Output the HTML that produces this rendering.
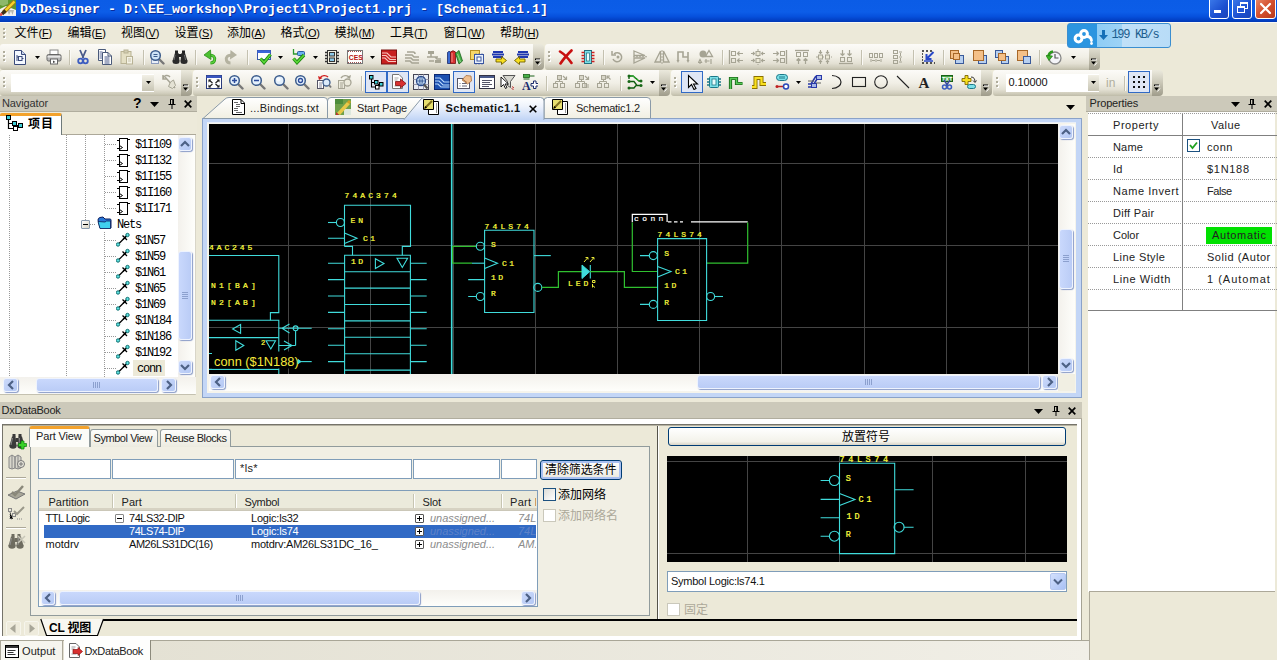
<!DOCTYPE html><html><head><meta charset="utf-8"><title>DxDesigner</title><style>
*{box-sizing:border-box;margin:0;padding:0}
html,body{width:1277px;height:660px;overflow:hidden;background:#ECE9D8}
body{position:relative;font-family:"Liberation Sans","Noto Sans CJK SC",sans-serif;font-size:12px;color:#000}
.a{position:absolute}
.t{position:absolute;white-space:nowrap;line-height:1}
.tb{position:absolute;height:26px;background:linear-gradient(#FCFBF8 0%,#F1EFE6 50%,#E3E0D3 75%,#D0CDBC 90%,#BEBBA8 100%);border-radius:3px 0 0 3px}
.tbe{position:absolute;width:11px;height:26px;background:linear-gradient(#EBE9DD 0%,#C9C6B6 50%,#9F9C8B 100%);border-radius:0 4px 4px 0}
.grip{position:absolute;width:2px;height:2px;background:#B0AD9C;box-shadow:1px 1px 0 #fff}
.sep{position:absolute;width:1px;background:#C4C1B0;box-shadow:1px 0 0 #FAF9F5}
.mono{font-family:"Liberation Mono","Noto Sans CJK SC",monospace}
.serif{font-family:"Liberation Serif","Noto Serif CJK SC",serif}
.sel{position:absolute;border:1px solid #316AC5;background:#DFE6F5}
.hdr{position:absolute;height:16px;background:#CCC9BA;border-bottom:1px solid #B0AD9E}
</style></head><body>
<div class="a" style="left:0px;top:0px;width:1277px;height:22px;background:linear-gradient(#0B5CE6 0%,#0C5DE8 55%,#0650DC 75%,#0240C4 92%,#0238B4 100%)"></div>
<svg class="a" style="left:0;top:0" width="16" height="16" viewBox="0 0 16 16"><rect width="16" height="16" fill="#5E982E"/><path d="M0 0h8v4l-5 2-3-1z" fill="#8DB86A"/><path d="M0 9l6-3 10 4v6H0z" fill="#F2F2EE"/><path d="M7 10l2 5 2-4 1.500 4 1.500-5z" fill="#B8B8B0"/><path d="M14.500 1.500L3.500 12.500" stroke="#A87818" stroke-width="4"/><path d="M14.500 1.500L4 12" stroke="#F6D428" stroke-width="2.400"/><path d="M5.500 10.500L2 14" stroke="#3A3018" stroke-width="3.200"/><path d="M2 13.500L0 15.500" stroke="#D84848" stroke-width="2.600"/></svg>
<div class="t mono" style="left:20px;top:3px;font-size:13.33px;color:#fff;font-weight:bold;letter-spacing:0;text-shadow:1px 1px 0 #0A2C9C">DxDesigner - D:\EE_workshop\Project1\Project1.prj - [Schematic1.1]</div>
<div class="a" style="left:1209px;top:-3px;width:20px;height:22px;border:1px solid #fff;border-radius:3px;background:linear-gradient(135deg,#3C7BEB,#1B4FD0 60%,#1C45B8)"><div class="a" style="left:4px;top:12px;width:7px;height:3px;background:#fff"></div></div>
<div class="a" style="left:1232px;top:-3px;width:20px;height:22px;border:1px solid #fff;border-radius:3px;background:linear-gradient(135deg,#3C7BEB,#1B4FD0 60%,#1C45B8)"><div class="a" style="left:7px;top:4px;width:8px;height:7px;border:1px solid #fff;border-top-width:2px"></div><div class="a" style="left:4px;top:8px;width:8px;height:7px;border:1px solid #fff;border-top-width:2px;background:#2457D6"></div></div>
<div class="a" style="left:1255px;top:-3px;width:21px;height:22px;border:1px solid #fff;border-radius:3px;background:linear-gradient(135deg,#E98A6B,#D4502F 50%,#B83A1B)"><svg class="a" style="left:3px;top:4px" width="13" height="13" viewBox="0 0 13 13"><path d="M2 2L11 11M11 2L2 11" stroke="#fff" stroke-width="2.2" stroke-linecap="round"/></svg></div>
<div class="a" style="left:0px;top:22px;width:1277px;height:22px;background:#ECE9D9;border-top:1px solid #F8F8F4"></div>
<div class="grip" style="left:3px;top:28px"></div>
<div class="grip" style="left:3px;top:32px"></div>
<div class="grip" style="left:3px;top:36px"></div>
<div class="t " style="left:14.5px;top:27px;font-size:12px;letter-spacing:0">文件<span style="font-size:11px;letter-spacing:-0.2px">(<u>F</u>)</span></div>
<div class="t " style="left:67.5px;top:27px;font-size:12px;letter-spacing:0">编辑<span style="font-size:11px;letter-spacing:-0.2px">(<u>E</u>)</span></div>
<div class="t " style="left:121px;top:27px;font-size:12px;letter-spacing:0">视图<span style="font-size:11px;letter-spacing:-0.2px">(<u>V</u>)</span></div>
<div class="t " style="left:174.5px;top:27px;font-size:12px;letter-spacing:0">设置<span style="font-size:11px;letter-spacing:-0.2px">(<u>S</u>)</span></div>
<div class="t " style="left:227px;top:27px;font-size:12px;letter-spacing:0">添加<span style="font-size:11px;letter-spacing:-0.2px">(<u>A</u>)</span></div>
<div class="t " style="left:280.5px;top:27px;font-size:12px;letter-spacing:0">格式<span style="font-size:11px;letter-spacing:-0.2px">(<u>O</u>)</span></div>
<div class="t " style="left:334.5px;top:27px;font-size:12px;letter-spacing:0">模拟<span style="font-size:11px;letter-spacing:-0.2px">(<u>M</u>)</span></div>
<div class="t " style="left:390px;top:27px;font-size:12px;letter-spacing:0">工具<span style="font-size:11px;letter-spacing:-0.2px">(<u>T</u>)</span></div>
<div class="t " style="left:443.5px;top:27px;font-size:12px;letter-spacing:0">窗口<span style="font-size:11px;letter-spacing:-0.2px">(<u>W</u>)</span></div>
<div class="t " style="left:500px;top:27px;font-size:12px;letter-spacing:0">帮助<span style="font-size:11px;letter-spacing:-0.2px">(<u>H</u>)</span></div>
<div class="tb" style="left:0px;top:44px;width:533px"></div>
<div class="tbe" style="left:533px;top:44px"></div>
<div class="grip" style="left:3px;top:51px"></div>
<div class="grip" style="left:3px;top:55px"></div>
<div class="grip" style="left:3px;top:59px"></div>
<svg class="a" style="left:534px;top:58px" width="8" height="9" viewBox="0 0 8 9"><path d="M1 0.5h5v1.4h-5zM1 3.5h5L3.5 6.5z" fill="#000"/><path d="M2 1.9h5M4.5 7.5L7 4.5" stroke="#fff" stroke-width="1" fill="none"/></svg>
<div class="tb" style="left:545px;top:44px;width:544px"></div>
<div class="tbe" style="left:1089px;top:44px"></div>
<div class="grip" style="left:548px;top:51px"></div>
<div class="grip" style="left:548px;top:55px"></div>
<div class="grip" style="left:548px;top:59px"></div>
<svg class="a" style="left:1090px;top:58px" width="8" height="9" viewBox="0 0 8 9"><path d="M1 0.5h5v1.4h-5zM1 3.5h5L3.5 6.5z" fill="#000"/><path d="M2 1.9h5M4.5 7.5L7 4.5" stroke="#fff" stroke-width="1" fill="none"/></svg>
<div class="tb" style="left:0px;top:70px;width:181px"></div>
<div class="tbe" style="left:181px;top:70px"></div>
<div class="grip" style="left:3px;top:77px"></div>
<div class="grip" style="left:3px;top:81px"></div>
<div class="grip" style="left:3px;top:85px"></div>
<svg class="a" style="left:182px;top:84px" width="8" height="9" viewBox="0 0 8 9"><path d="M1 0.5h5v1.4h-5zM1 3.5h5L3.5 6.5z" fill="#000"/><path d="M2 1.9h5M4.5 7.5L7 4.5" stroke="#fff" stroke-width="1" fill="none"/></svg>
<div class="tb" style="left:193px;top:70px;width:466px"></div>
<div class="tbe" style="left:659px;top:70px"></div>
<div class="grip" style="left:196px;top:77px"></div>
<div class="grip" style="left:196px;top:81px"></div>
<div class="grip" style="left:196px;top:85px"></div>
<svg class="a" style="left:660px;top:84px" width="8" height="9" viewBox="0 0 8 9"><path d="M1 0.5h5v1.4h-5zM1 3.5h5L3.5 6.5z" fill="#000"/><path d="M2 1.9h5M4.5 7.5L7 4.5" stroke="#fff" stroke-width="1" fill="none"/></svg>
<div class="tb" style="left:671px;top:70px;width:310px"></div>
<div class="tbe" style="left:981px;top:70px"></div>
<div class="grip" style="left:674px;top:77px"></div>
<div class="grip" style="left:674px;top:81px"></div>
<div class="grip" style="left:674px;top:85px"></div>
<svg class="a" style="left:982px;top:84px" width="8" height="9" viewBox="0 0 8 9"><path d="M1 0.5h5v1.4h-5zM1 3.5h5L3.5 6.5z" fill="#000"/><path d="M2 1.9h5M4.5 7.5L7 4.5" stroke="#fff" stroke-width="1" fill="none"/></svg>
<div class="tb" style="left:993px;top:70px;width:159px"></div>
<div class="tbe" style="left:1152px;top:70px"></div>
<div class="grip" style="left:996px;top:77px"></div>
<div class="grip" style="left:996px;top:81px"></div>
<div class="grip" style="left:996px;top:85px"></div>
<svg class="a" style="left:1153px;top:84px" width="8" height="9" viewBox="0 0 8 9"><path d="M1 0.5h5v1.4h-5zM1 3.5h5L3.5 6.5z" fill="#000"/><path d="M2 1.9h5M4.5 7.5L7 4.5" stroke="#fff" stroke-width="1" fill="none"/></svg>
<!--ICONS-->
<svg class="a" style="left:12.0px;top:49.0px" width="16" height="16" viewBox="0 0 16 16"><path d="M2.500 1.500H9.500L13.500 5.500V15.500H2.500Z" fill="#F4F8FF" stroke="#3A4A7A"/><path d="M9.500 1.500V5.500H13.500" fill="#C8D4EC" stroke="#3A4A7A"/><path d="M5 6v6M5 8h2M10 9.500h1.500" stroke="#3A4A7A"/><rect x="6.500" y="7.500" width="3.500" height="4" fill="none" stroke="#3A4A7A"/></svg>
<svg class="a" style="left:35.0px;top:56px" width="5" height="3" viewBox="0 0 5 3"><path d="M0 0h5L2.500 3z" fill="#000"/></svg>
<svg class="a" style="left:46.0px;top:49.0px" width="16" height="16" viewBox="0 0 16 16"><rect x="4" y="1" width="8" height="5" fill="#fff" stroke="#888"/><rect x="1" y="5.500" width="14" height="6.500" rx="1.500" fill="#B8B8B8" stroke="#666"/><rect x="1.500" y="7" width="13" height="1.500" fill="#E8E8E8"/><rect x="4.500" y="10" width="7" height="5" fill="#fff" stroke="#666"/><path d="M7 11.500l2.500 1.500-2.500 1z" fill="#444"/></svg>
<div class="sep" style="left:69px;top:50px;height:15px"></div>
<svg class="a" style="left:74.5px;top:49.0px" width="16" height="16" viewBox="0 0 16 16"><path d="M5 1l3.500 8M11 1L7.500 9" stroke="#4A5A8A" stroke-width="1.800"/><circle cx="5.500" cy="12" r="2.300" fill="none" stroke="#3C5CC0" stroke-width="1.800"/><circle cx="10.500" cy="12" r="2.300" fill="none" stroke="#3C5CC0" stroke-width="1.800"/></svg>
<svg class="a" style="left:97.0px;top:49.0px" width="16" height="16" viewBox="0 0 16 16"><path d="M1.500 0.500H8.500V11.500H1.500Z" fill="#fff" stroke="#4A5A7A"/><path d="M2.500 3h3M2.500 5h3M2.500 7h3M2.500 9h3" stroke="#5A6A9A"/><path d="M5.500 3.500H11L14.500 7V15.500H5.500Z" fill="#fff" stroke="#4A5A7A"/><path d="M7.500 8h5M7.500 10h5M7.500 12h5M7.500 14h5" stroke="#4A5A8A"/><path d="M11 3.500V7h3.500" fill="none" stroke="#4A5A7A"/></svg>
<svg class="a" style="left:119.0px;top:49.0px" width="16" height="16" viewBox="0 0 16 16"><rect x="2" y="2.500" width="10" height="12" fill="#E4DFC4" stroke="#B8B294"/><rect x="5" y="1" width="4" height="3" fill="#D0CBB0" stroke="#B8B294"/><rect x="7.500" y="7.500" width="6" height="7.500" fill="#F4F2E6" stroke="#B8B294"/><path d="M9 10h3M9 12h3" stroke="#C8C4AC"/></svg>
<div class="sep" style="left:143px;top:50px;height:15px"></div>
<svg class="a" style="left:149.0px;top:49.0px" width="16" height="16" viewBox="0 0 16 16"><rect x="2.500" y="6.500" width="7" height="8" fill="#E8EEF8" stroke="#8A9ABC"/><path d="M10 10L14.500 14.500" stroke="#777" stroke-width="2.400" stroke-linecap="round"/><circle cx="6.5" cy="6.5" r="4.800" fill="#CFE4F8" stroke="#3C5C8C" stroke-width="1.500"/><path d="M4.500 5.500h4M4.500 7.500h4" stroke="#3C5C8C" stroke-width="1.200"/></svg>
<svg class="a" style="left:172.0px;top:49.0px" width="16" height="16" viewBox="0 0 16 16"><path d="M3 1.500h3v3h-3zM10 1.500h3v3h-3zM6 5h4v3h-4z" fill="#222"/><path d="M0.500 12L3 4h3.500l1 8zM8.500 12l1-8h3.500l2.500 8z" fill="#2A2A2A"/><ellipse cx="4" cy="12.500" rx="3.500" ry="2.500" fill="#2A2A2A"/><ellipse cx="12" cy="12.500" rx="3.500" ry="2.500" fill="#2A2A2A"/><path d="M3 6l-1 5M12.500 6l1 5" stroke="#888" stroke-width="0.800"/></svg>
<div class="sep" style="left:195px;top:50px;height:15px"></div>
<svg class="a" style="left:202.0px;top:49.0px" width="16" height="16" viewBox="0 0 16 16"><path d="M7 6.500c4.500-1 6.500 2 5.500 5-0.500 1.500-2 2.500-4 2.500" fill="none" stroke="#2C9A1C" stroke-width="3"/><path d="M7 6.500c4.500-1 6.500 2 5.500 5-0.500 1.500-2 2.500-4 2.500" fill="none" stroke="#5CD03C" stroke-width="1.500"/><path d="M8.500 1L2 6l7 4.500z" fill="#4CC030" stroke="#2C8A1C" stroke-width="0.800"/></svg>
<svg class="a" style="left:223.0px;top:49.0px" width="16" height="16" viewBox="0 0 16 16"><path d="M9 6.500c-4.500-1-6.500 2-5.500 5 0.500 1.500 2 2.500 4 2.500" fill="none" stroke="#B4B2A0" stroke-width="3"/><path d="M7.500 1L14 6l-7 4.500z" fill="#B4B2A0"/></svg>
<div class="sep" style="left:247px;top:50px;height:15px"></div>
<svg class="a" style="left:256.0px;top:49.0px" width="16" height="16" viewBox="0 0 16 16"><rect x="1.500" y="1.500" width="13" height="9" fill="#fff" stroke="#3A56B0"/><rect x="1.500" y="1.500" width="13" height="2.500" fill="#3A66D8"/><path d="M4.500 9.500l3.500 4 6.500-8" fill="none" stroke="#1E8A12" stroke-width="3.400"/><path d="M4.500 9.500l3.500 4 6.500-8" fill="none" stroke="#5CD838" stroke-width="1.600"/></svg>
<svg class="a" style="left:277.5px;top:56px" width="5" height="3" viewBox="0 0 5 3"><path d="M0 0h5L2.500 3z" fill="#000"/></svg>
<svg class="a" style="left:291.0px;top:49.0px" width="16" height="16" viewBox="0 0 16 16"><path d="M2.500 0v5h4" fill="none" stroke="#2C9A2C" stroke-width="1.300"/><rect x="6.500" y="2.500" width="7" height="4" rx="1" fill="#6CB0F0" stroke="#2A5AA0"/><path d="M2.500 9.500l3.500 4 7-7.500" fill="none" stroke="#1E8A12" stroke-width="3.400"/><path d="M2.500 9.500l3.500 4 7-7.500" fill="none" stroke="#5CD838" stroke-width="1.600"/></svg>
<svg class="a" style="left:312.5px;top:56px" width="5" height="3" viewBox="0 0 5 3"><path d="M0 0h5L2.500 3z" fill="#000"/></svg>
<svg class="a" style="left:324.0px;top:49.0px" width="16" height="16" viewBox="0 0 16 16"><rect x="3.500" y="1.500" width="9" height="13" fill="#F0EEE0" stroke="#333"/><path d="M1 3.500h2.500M1 6.500h2.500M1 9.500h2.500M1 12.500h2.500M12.500 3.500h2.500M12.500 6.500h2.500M12.500 9.500h2.500M12.500 12.500h2.500" stroke="#333" stroke-width="1.400"/><rect x="5.500" y="3.500" width="5" height="3.500" fill="#8CC8E8" stroke="#333"/><rect x="5.500" y="9" width="5" height="3.500" fill="#8CC8E8" stroke="#333"/></svg>
<svg class="a" style="left:347.0px;top:49.0px" width="16" height="16" viewBox="0 0 16 16"><rect x="0.500" y="1.500" width="15" height="13" fill="#fff" stroke="#777"/><path d="M1 2.500h14M1 13.500h14" stroke="#A05050" stroke-dasharray="1 1"/><text x="1.800" y="10.500" font-family="Liberation Sans, sans-serif" font-size="6.800" font-weight="bold" fill="#B81010" letter-spacing="0">CES</text></svg>
<svg class="a" style="left:369.5px;top:56px" width="5" height="3" viewBox="0 0 5 3"><path d="M0 0h5L2.500 3z" fill="#000"/></svg>
<svg class="a" style="left:381.0px;top:49.0px" width="16" height="16" viewBox="0 0 16 16"><rect x="0.500" y="1" width="15" height="14" fill="#C82020" stroke="#7A1010"/><path d="M1 4h5l4 4h5M1 6.500h4l4 4h6M1 9h3l3.500 3.500h7.500" fill="none" stroke="#F8C8C0" stroke-width="1.100"/></svg>
<svg class="a" style="left:404.0px;top:49.0px" width="16" height="16" viewBox="0 0 16 16"><path d="M3 3h6q2 0 2 2M1 6h7l2 2h5M1 9h6l2 2h6M1 12h5l2 2h7" fill="none" stroke="#A6A494" stroke-width="1.600"/></svg>
<svg class="a" style="left:425.5px;top:49.0px" width="16" height="16" viewBox="0 0 16 16"><rect x="2" y="2" width="6" height="3" fill="#A6A494"/><rect x="9" y="11" width="6" height="3" fill="#A6A494"/><path d="M5 5v3h7M1 8h8l2 2h4M3 12h5" fill="none" stroke="#A6A494" stroke-width="1.500"/></svg>
<svg class="a" style="left:447.0px;top:49.0px" width="16" height="16" viewBox="0 0 16 16"><path d="M0.500 3.500Q2 1.500 3.500 3V14.500H0.500Z" fill="#3A6AD0" stroke="#1A2A6A" stroke-width="0.800"/><path d="M3.500 3Q6 0.500 8.500 3V14.500H3.500Z" fill="#D83030" stroke="#701010" stroke-width="0.800"/><path d="M5 4v9" stroke="#F8B0A0" stroke-width="0.800"/><path d="M8.500 4.500L12 1.500l3.500 10.500L12 15z" fill="#48B048" stroke="#186018" stroke-width="0.800"/><path d="M10.500 5l3 8" stroke="#A8E0A0" stroke-width="0.800"/></svg>
<svg class="a" style="left:469.0px;top:49.0px" width="16" height="16" viewBox="0 0 16 16"><rect x="1.500" y="1.500" width="9" height="9" fill="#F8D868" stroke="#B89020"/><rect x="5.500" y="5.500" width="9" height="9" fill="#E8F0FC" stroke="#3A56A0"/><rect x="8" y="8" width="4" height="4" fill="#fff" stroke="#3A56A0"/><path d="M7 5.500v-1M10 5.500v-1M13 5.500v-1M7 15.500v-1M10 15.500v-1M13 15.500v-1" stroke="#3A56A0"/></svg>
<svg class="a" style="left:491.0px;top:49.0px" width="16" height="16" viewBox="0 0 16 16"><path d="M2 3h10M1 5.500h12M2 8h10" stroke="#2038B0" stroke-width="1.800"/><path d="M5 10h5.500v-2.500l5 4-5 4v-2.500h-5.500z" fill="#F8E020" stroke="#706000" stroke-width="0.900"/></svg>
<svg class="a" style="left:514.0px;top:49.0px" width="16" height="16" viewBox="0 0 16 16"><path d="M4 3h10M3 5.500h12M4 8h10" stroke="#2038B0" stroke-width="1.800"/><path d="M11 10h-5.500v-2.500l-5 4 5 4v-2.500h5.500z" fill="#F8E020" stroke="#706000" stroke-width="0.900"/></svg>
<svg class="a" style="left:558.0px;top:49.0px" width="16" height="16" viewBox="0 0 16 16"><path d="M2 2.500C6 5 10 9 13.500 14M13.500 1.500C10 5 6 9 2.500 14.500" stroke="#C81010" stroke-width="2.600" fill="none" stroke-linecap="round"/></svg>
<svg class="a" style="left:580.0px;top:49.0px" width="16" height="16" viewBox="0 0 16 16"><rect x="4.500" y="1.500" width="7" height="13" fill="#7CE0E8" stroke="#207080"/><rect x="6.500" y="4" width="3" height="8" fill="#E8FCFC" stroke="#207080" stroke-width="0.700"/><path d="M1.500 3.500h3M1.500 6.500h3M1.500 9.500h3M1.500 12.500h3M11.500 3.500h3M11.500 6.500h3M11.500 9.500h3M11.500 12.500h3" stroke="#D02020" stroke-width="1.500"/></svg>
<div class="sep" style="left:603px;top:50px;height:15px"></div>
<svg class="a" style="left:610.0px;top:49.0px" width="16" height="16" viewBox="0 0 16 16"><path d="M4 5a4.500 4.500 0 1 1-1 5" fill="none" stroke="#A6A494" stroke-width="1.500"/><path d="M2 2v4h4" fill="none" stroke="#A6A494" stroke-width="1.500"/><circle cx="8" cy="8" r="1.500" fill="#A6A494"/></svg>
<svg class="a" style="left:632.0px;top:49.0px" width="16" height="16" viewBox="0 0 16 16"><path d="M2 2l11 4.500H2zM2 9h11L2 14z" fill="none" stroke="#A6A494" stroke-width="1.300"/><path d="M1 7.750h14" stroke="#A6A494" stroke-dasharray="2 1"/></svg>
<svg class="a" style="left:654.0px;top:49.0px" width="16" height="16" viewBox="0 0 16 16"><path d="M6.500 2v11H1zM9.500 2v11H15z" fill="none" stroke="#A6A494" stroke-width="1.300"/><path d="M8 1v14" stroke="#A6A494" stroke-dasharray="2 1"/></svg>
<svg class="a" style="left:675.5px;top:49.0px" width="16" height="16" viewBox="0 0 16 16"><path d="M2 11V3h5v5h5V3M12 3v8" fill="none" stroke="#A6A494" stroke-width="1.600"/><path d="M0.500 11l1.500 3 1.500-3zM10.500 11l1.500 3 1.500-3z" fill="#A6A494"/></svg>
<svg class="a" style="left:698.0px;top:49.0px" width="16" height="16" viewBox="0 0 16 16"><circle cx="5" cy="5" r="3.500" fill="#A6A494"/><path d="M11 1.500l3.500 6h-7z" fill="none" stroke="#A6A494" stroke-width="1.300"/><path d="M2 10.500l-1.500 3h3zM2 13v2M8 10v4M6.500 12h5M13 10v5" stroke="#A6A494" stroke-width="1.200" fill="none"/></svg>
<div class="sep" style="left:721.5px;top:50px;height:15px"></div>
<svg class="a" style="left:728.0px;top:49.0px" width="16" height="16" viewBox="0 0 16 16"><path d="M1.500 1v14" stroke="#A6A494" stroke-width="1.300"/><rect x="3.500" y="2.500" width="4" height="4" fill="none" stroke="#A6A494"/><rect x="3.500" y="9.500" width="4" height="4" fill="none" stroke="#A6A494"/><path d="M15 4.500H9.500M11.500 2.500l-2 2 2 2M15 11.500H9.500M11.500 9.500l-2 2 2 2" fill="none" stroke="#A6A494" stroke-width="1.200"/></svg>
<svg class="a" style="left:750.0px;top:49.0px" width="16" height="16" viewBox="0 0 16 16"><path d="M8 0v16" stroke="#A6A494" stroke-dasharray="2 1"/><rect x="6" y="2.500" width="4" height="4" fill="#ECE9D8" stroke="#A6A494"/><rect x="6" y="9.500" width="4" height="4" fill="#ECE9D8" stroke="#A6A494"/><path d="M1 4.500h3.500M3 3l1.500 1.500L3 6M15 4.500h-3.500M13 3l-1.500 1.500L13 6M1 11.500h3.500M3 10l1.500 1.500L3 13M15 11.500h-3.500M13 10l-1.500 1.500L13 13" fill="none" stroke="#A6A494" stroke-width="1.100"/></svg>
<svg class="a" style="left:772.0px;top:49.0px" width="16" height="16" viewBox="0 0 16 16"><path d="M14.500 1v14" stroke="#A6A494" stroke-width="1.300"/><rect x="8.500" y="2.500" width="4" height="4" fill="none" stroke="#A6A494"/><rect x="8.500" y="9.500" width="4" height="4" fill="none" stroke="#A6A494"/><path d="M1 4.500H6.500M4.500 2.500l2 2-2 2M1 11.500H6.500M4.500 9.500l2 2-2 2" fill="none" stroke="#A6A494" stroke-width="1.200"/></svg>
<svg class="a" style="left:794.0px;top:49.0px" width="16" height="16" viewBox="0 0 16 16"><path d="M1 1.500h14" stroke="#A6A494" stroke-width="1.300"/><rect x="2.500" y="3.500" width="4" height="4" fill="none" stroke="#A6A494"/><rect x="9.500" y="3.500" width="4" height="4" fill="none" stroke="#A6A494"/><path d="M4.500 15V9.500M2.500 11.500l2-2 2 2M11.500 15V9.500M9.500 11.500l2-2 2 2" fill="none" stroke="#A6A494" stroke-width="1.200"/></svg>
<svg class="a" style="left:815.5px;top:49.0px" width="16" height="16" viewBox="0 0 16 16"><path d="M0 8h16" stroke="#A6A494" stroke-dasharray="2 1"/><rect x="2.500" y="6" width="4" height="4" fill="#ECE9D8" stroke="#A6A494"/><rect x="9.500" y="6" width="4" height="4" fill="#ECE9D8" stroke="#A6A494"/><path d="M4.500 1v3.500M3 3l1.500 1.500L6 3M11.500 1v3.500M10 3l1.500 1.500L13 3M4.500 15v-3.500M3 13l1.500-1.500L6 13M11.500 15v-3.500M10 13l1.500-1.500L13 13" fill="none" stroke="#A6A494" stroke-width="1.100"/></svg>
<svg class="a" style="left:837.5px;top:49.0px" width="16" height="16" viewBox="0 0 16 16"><path d="M1 14.500h14" stroke="#A6A494" stroke-width="1.300"/><rect x="2.500" y="8.500" width="4" height="4" fill="none" stroke="#A6A494"/><rect x="9.500" y="8.500" width="4" height="4" fill="none" stroke="#A6A494"/><path d="M4.500 1V6.500M2.500 4.500l2 2 2-2M11.500 1V6.500M9.500 4.500l2 2 2-2" fill="none" stroke="#A6A494" stroke-width="1.200"/></svg>
<div class="sep" style="left:861px;top:50px;height:15px"></div>
<svg class="a" style="left:868.0px;top:49.0px" width="16" height="16" viewBox="0 0 16 16"><rect x="1.500" y="4.500" width="3" height="4" fill="none" stroke="#A6A494"/><rect x="6.500" y="4.500" width="3" height="4" fill="none" stroke="#A6A494"/><rect x="11.500" y="4.500" width="3" height="4" fill="none" stroke="#A6A494"/><path d="M3 10v3M8 10v3M13 10v3M4 11.500h3M9 11.500h3" stroke="#A6A494"/></svg>
<svg class="a" style="left:890.0px;top:49.0px" width="16" height="16" viewBox="0 0 16 16"><rect x="3.500" y="1.500" width="4" height="3" fill="none" stroke="#A6A494"/><rect x="3.500" y="6.500" width="4" height="3" fill="none" stroke="#A6A494"/><rect x="3.500" y="11.500" width="4" height="3" fill="none" stroke="#A6A494"/><path d="M9 3h3M9 8h3M9 13h3M10.500 4v3M10.500 9v3" stroke="#A6A494"/></svg>
<div class="sep" style="left:913px;top:50px;height:15px"></div>
<svg class="a" style="left:920.0px;top:49.0px" width="16" height="16" viewBox="0 0 16 16"><path d="M2 2h2M6 2h2M10 2h2M2 5h1M2 8h1M2 11h1M2 14h2M6 14h2M10 14h2M14 14h1" stroke="#222" stroke-width="1.500"/><path d="M13.500 3L7 9.500M6.500 5v5h5" fill="none" stroke="#2848C8" stroke-width="2"/><path d="M4 12h9" stroke="#2848C8" stroke-width="1.500"/></svg>
<div class="sep" style="left:943px;top:50px;height:15px"></div>
<svg class="a" style="left:949.0px;top:49.0px" width="16" height="16" viewBox="0 0 16 16"><rect x="1.500" y="1.500" width="8" height="8" fill="#F4C088" stroke="#A86828"/><rect x="6.500" y="6.500" width="8" height="8" fill="#B8D0F0" stroke="#3A5A9A"/><rect x="4.500" y="4.500" width="6" height="6" fill="#F4C088" stroke="#A86828"/></svg>
<svg class="a" style="left:972.0px;top:49.0px" width="16" height="16" viewBox="0 0 16 16"><rect x="6.500" y="6.500" width="8" height="8" fill="#B8D0F0" stroke="#3A5A9A"/><rect x="1.500" y="1.500" width="10" height="10" fill="#F4C088" stroke="#A86828"/></svg>
<svg class="a" style="left:994.0px;top:49.0px" width="16" height="16" viewBox="0 0 16 16"><rect x="1.500" y="1.500" width="7" height="7" fill="#B8D0F0" stroke="#3A5A9A"/><rect x="7.500" y="7.500" width="7" height="7" fill="#B8D0F0" stroke="#3A5A9A"/><rect x="4.500" y="4.500" width="7" height="7" fill="#F4C088" stroke="#A86828"/></svg>
<svg class="a" style="left:1016.0px;top:49.0px" width="16" height="16" viewBox="0 0 16 16"><rect x="1.500" y="1.500" width="10" height="10" fill="#F4C088" stroke="#A86828"/><rect x="7.500" y="7.500" width="7" height="7" fill="#B8D0F0" stroke="#3A5A9A"/></svg>
<div class="sep" style="left:1039px;top:50px;height:15px"></div>
<svg class="a" style="left:1046.0px;top:49.0px" width="16" height="16" viewBox="0 0 16 16"><circle cx="9" cy="9" r="6" fill="#F4F4F8" stroke="#888" stroke-width="1.300"/><path d="M9 5v4h3.500" fill="none" stroke="#555" stroke-width="1.200"/><path d="M7 2.500c-3 0.500-5 3-4.500 6" fill="none" stroke="#2C9A1C" stroke-width="2.600"/><path d="M0 6.500l3 5 3.500-4.500z" fill="#3CB828" stroke="#1C7A10" stroke-width="0.700"/></svg>
<svg class="a" style="left:1071.0px;top:56px" width="5" height="3" viewBox="0 0 5 3"><path d="M0 0h5L2.500 3z" fill="#000"/></svg>
<div class="a" style="left:11px;top:74px;width:143px;height:18px;background:#fff;border:1px solid #fff"></div>
<div class="a" style="left:142px;top:75px;width:12px;height:16px;background:linear-gradient(#F2F0E6,#C8C5B4)"></div>
<svg class="a" style="left:146.0px;top:81px" width="5" height="3" viewBox="0 0 5 3"><path d="M0 0h5L2.500 3z" fill="#000"/></svg>
<svg class="a" style="left:160.5px;top:74.0px" width="16" height="16" viewBox="0 0 16 16"><path d="M2 4.500A4 4 0 0 1 9 3M2 1v4h3.500" fill="none" stroke="#A6A494" stroke-width="1.500"/><path d="M4 3l10 11" stroke="#A6A494" stroke-width="1.500"/><path d="M9.500 8l3-2 2 5.500-3 3-4-2z" fill="#E4E2D4" stroke="#A6A494" stroke-width="1"/></svg>
<svg class="a" style="left:206.0px;top:74.0px" width="16" height="16" viewBox="0 0 16 16"><rect x="0.500" y="1.500" width="15" height="13" fill="#fff" stroke="#2A3A7A"/><rect x="0.500" y="1.500" width="15" height="2.500" fill="#3A56C0"/><path d="M3 6l3.500 3M13 6l-3.500 3M3 13l3.500-3M13 13l-3.500-3" stroke="#222" stroke-width="1.200"/><path d="M2.500 5.500h3l-3 3zM13.500 5.500h-3l3 3zM2.500 13.500h3l-3-3zM13.500 13.500h-3l3-3z" fill="#222"/></svg>
<svg class="a" style="left:228.0px;top:74.0px" width="16" height="16" viewBox="0 0 16 16"><path d="M10 10L14.500 14.500" stroke="#777" stroke-width="2.400" stroke-linecap="round"/><circle cx="6.5" cy="6.5" r="4.800" fill="#E4F0FC" stroke="#3C5C8C" stroke-width="1.500"/><path d="M4 6.500h5M6.500 4v5" stroke="#2A4A9A" stroke-width="1.500"/></svg>
<svg class="a" style="left:250.0px;top:74.0px" width="16" height="16" viewBox="0 0 16 16"><path d="M10 10L14.500 14.500" stroke="#777" stroke-width="2.400" stroke-linecap="round"/><circle cx="6.5" cy="6.5" r="4.800" fill="#E4F0FC" stroke="#3C5C8C" stroke-width="1.500"/><path d="M4 6.500h5" stroke="#2A4A9A" stroke-width="1.500"/></svg>
<svg class="a" style="left:272.5px;top:74.0px" width="16" height="16" viewBox="0 0 16 16"><path d="M10 10L14.500 14.500" stroke="#777" stroke-width="2.400" stroke-linecap="round"/><circle cx="6.5" cy="6.5" r="4.800" fill="#E4F0FC" stroke="#3C5C8C" stroke-width="1.500"/><circle cx="5.500" cy="5.500" r="2" fill="#fff" opacity="0.800"/></svg>
<svg class="a" style="left:294.0px;top:74.0px" width="16" height="16" viewBox="0 0 16 16"><path d="M10 10L14.500 14.500" stroke="#777" stroke-width="2.400" stroke-linecap="round"/><circle cx="6.5" cy="6.5" r="4.800" fill="#E4F0FC" stroke="#3C5C8C" stroke-width="1.500"/><circle cx="6.500" cy="6.500" r="2" fill="none" stroke="#2A4A9A" stroke-width="1.300"/></svg>
<svg class="a" style="left:316.0px;top:74.0px" width="16" height="16" viewBox="0 0 16 16"><rect x="1.500" y="6.500" width="6" height="8" fill="#fff" stroke="#556"/><path d="M3 9h3M3 11h3M3 13h3" stroke="#889"/><circle cx="10.500" cy="8.500" r="3.500" fill="#DCEBFA" stroke="#3C5C8C" stroke-width="1.300"/><path d="M13 11l2 2.500" stroke="#777" stroke-width="2"/><path d="M4 4c2-3 6-3 8-1" fill="none" stroke="#D02020" stroke-width="1.400"/><path d="M2 2l1 4 3.500-2z" fill="#D02020"/></svg>
<svg class="a" style="left:337.0px;top:74.0px" width="16" height="16" viewBox="0 0 16 16"><rect x="1.500" y="6.500" width="6" height="8" fill="#ECEADC" stroke="#A6A494"/><path d="M3 9h3M3 11h3M3 13h3" stroke="#A6A494"/><circle cx="10.500" cy="8.500" r="3.500" fill="#ECEADC" stroke="#A6A494" stroke-width="1.300"/><path d="M4 4c2-3 6-3 8-1" fill="none" stroke="#A6A494" stroke-width="1.400"/><path d="M14 1l-1 4-3.500-2z" fill="#A6A494"/></svg>
<div class="sep" style="left:361px;top:76px;height:15px"></div>
<div class="sel" style="left:365px;top:71px;width:22px;height:22px"></div>
<div class="sel" style="left:387px;top:71px;width:22px;height:22px"></div>
<div class="sel" style="left:453px;top:71px;width:22px;height:22px"></div>
<svg class="a" style="left:368.0px;top:74.0px" width="16" height="16" viewBox="0 0 16 16"><path d="M3.500 4v9h4M3.500 8.500h3M10 10.500h3" stroke="#000" stroke-width="1.100" fill="none"/><rect x="1.500" y="1.500" width="3.500" height="3.500" fill="#40D0D8" stroke="#000"/><rect x="6.500" y="6.500" width="3.500" height="3.500" fill="#40D0D8" stroke="#000"/><rect x="7.500" y="11.500" width="3.500" height="3.500" fill="#fff" stroke="#000"/><rect x="11.500" y="8.500" width="3.500" height="3.500" fill="#40D0D8" stroke="#000"/></svg>
<svg class="a" style="left:390.5px;top:74.0px" width="16" height="16" viewBox="0 0 16 16"><path d="M1.500 0.500H8L11.500 4V14.500H1.500Z" fill="#fff" stroke="#777"/><path d="M3.500 4h4M3.500 6h3M3.500 12h6" stroke="#AAA"/><path d="M4.500 7.500h5v-2.500l5.500 4.500-5.500 4.500v-2.500h-5z" fill="#D83030" stroke="#801010" stroke-width="0.800"/></svg>
<svg class="a" style="left:412.5px;top:74.0px" width="16" height="16" viewBox="0 0 16 16"><rect x="0.500" y="0.500" width="15" height="15" fill="#E8ECF4" stroke="#445"/><path d="M0.500 5.500h15M0.500 10.500h15M5.500 0.500v15M10.500 0.500v15" stroke="#99A"/><circle cx="8" cy="7" r="4.500" fill="#C8E0F8" stroke="#2A4A8A" stroke-width="1.300"/><path d="M8 2.500v9M3.500 7h9M5.500 3.500c1.500 2 1.500 5 0 7M10.500 3.500c-1.500 2-1.500 5 0 7" fill="none" stroke="#2A4A8A" stroke-width="0.700"/><path d="M11 10.500l3.500 4" stroke="#555" stroke-width="2.200"/></svg>
<svg class="a" style="left:433.5px;top:74.0px" width="16" height="16" viewBox="0 0 16 16"><rect x="0.500" y="0.500" width="15" height="15" fill="#1C50B0" stroke="#0C2870"/><path d="M1 4h5l4 4h5.500M1 7h4l4 4h6.500M1 10h3l3 3h8.500" fill="none" stroke="#B8D8FC" stroke-width="1.100"/></svg>
<svg class="a" style="left:456.0px;top:74.0px" width="16" height="16" viewBox="0 0 16 16"><rect x="1.500" y="4.500" width="12" height="10" fill="#fff" stroke="#556"/><path d="M3.500 9.500h1M6 9.500h5M3.500 12h1M6 12h5" stroke="#667"/><path d="M6 6l4-4.500 5 0.500 0.500 5-4 3z" fill="#F0C090" stroke="#A87040" stroke-width="0.800"/><path d="M7 5.500l4 3" stroke="#A87040"/></svg>
<svg class="a" style="left:479.0px;top:74.0px" width="16" height="16" viewBox="0 0 16 16"><rect x="0.500" y="1.500" width="15" height="13" fill="#fff" stroke="#334"/><rect x="1" y="2" width="14" height="2" fill="#4A5A8A"/><path d="M3 6.500h10M3 8.500h8M3 10.500h10M3 12.500h7" stroke="#556"/></svg>
<svg class="a" style="left:500.0px;top:74.0px" width="16" height="16" viewBox="0 0 16 16"><path d="M3 1.500h12l-4.500 6v6l-3-2v-4z" fill="#D8D8D0" stroke="#555" stroke-width="1"/><path d="M1 3l0 10 2.500-2.500 2 4 1.500-1-2-3.500h3.500z" fill="#fff" stroke="#000" stroke-width="0.900"/><path d="M12 12.500l2 1.500M11.500 14.500l2 1" stroke="#C03030" stroke-width="1"/></svg>
<svg class="a" style="left:522.0px;top:74.0px" width="16" height="16" viewBox="0 0 16 16"><rect x="1.500" y="0.500" width="6" height="3" fill="#48B048" stroke="#186018" stroke-width="0.800"/><path d="M7.500 2h5M1.500 5h6" stroke="#186018"/><text x="0" y="15.500" font-family="Liberation Serif, serif" font-size="12" font-weight="bold" fill="#1C2C6C">A</text><path d="M9 9.500h2.500v-2.500h2.500v2.500h2.500v2.500h-2.500v2.500h-2.500v-2.500h-2.500z" fill="#fff" stroke="#1C2C6C" stroke-width="1"/></svg>
<div class="sep" style="left:546px;top:76px;height:15px"></div>
<svg class="a" style="left:552.0px;top:74.0px" width="16" height="16" viewBox="0 0 16 16"><rect x="5.500" y="1.500" width="4" height="4" fill="#D8D6C8" stroke="#A6A494"/><rect x="1.500" y="9.500" width="4" height="4" fill="none" stroke="#A6A494"/><rect x="8.500" y="9.500" width="4" height="4" fill="none" stroke="#A6A494"/><path d="M3.500 9.500v-2h7v2M7.500 5.500v2" fill="none" stroke="#A6A494"/><path d="M11 2l3.500 3.500M14.500 2.500v3h-3" fill="none" stroke="#A6A494" stroke-width="1.200"/></svg>
<svg class="a" style="left:573.5px;top:74.0px" width="16" height="16" viewBox="0 0 16 16"><rect x="5.500" y="1.500" width="4" height="4" fill="#D8D6C8" stroke="#A6A494"/><rect x="1.500" y="9.500" width="4" height="4" fill="none" stroke="#A6A494"/><rect x="8.500" y="9.500" width="4" height="4" fill="none" stroke="#A6A494"/><path d="M3.500 9.500v-2h7v2M7.500 5.500v2" fill="none" stroke="#A6A494"/><path d="M11 2l3.500 3.500M14.500 2.500v3h-3M10 11h5M10 13h5" fill="none" stroke="#A6A494" stroke-width="1.200"/></svg>
<svg class="a" style="left:596.0px;top:74.0px" width="16" height="16" viewBox="0 0 16 16"><rect x="5.500" y="1.500" width="4" height="4" fill="#D8D6C8" stroke="#A6A494"/><rect x="1.500" y="9.500" width="4" height="4" fill="none" stroke="#A6A494"/><rect x="8.500" y="9.500" width="4" height="4" fill="none" stroke="#A6A494"/><path d="M3.500 9.500v-2h7v2M7.500 5.500v2" fill="none" stroke="#A6A494"/><path d="M14.500 5.500L11 2M11 5v-3h3" fill="none" stroke="#A6A494" stroke-width="1.200"/></svg>
<div class="sep" style="left:619.5px;top:76px;height:15px"></div>
<svg class="a" style="left:627.0px;top:74.0px" width="16" height="16" viewBox="0 0 16 16"><path d="M2 2h4l6 5h2M2 7.500h5l3 4h4M2 14h5l2-2.500M2 2v3" fill="none" stroke="#0C5C0C" stroke-width="1.300"/><path d="M3 2h3l6 5" fill="none" stroke="#30C030" stroke-width="1.300" stroke-dasharray="1.500 1"/><circle cx="2" cy="2" r="1.500" fill="#186818"/><circle cx="2" cy="7.500" r="1.500" fill="#186818"/><circle cx="2" cy="14" r="1.500" fill="#186818"/><circle cx="14" cy="7" r="1.500" fill="#186818"/><circle cx="14" cy="11.500" r="1.500" fill="#186818"/></svg>
<svg class="a" style="left:649.5px;top:81px" width="5" height="3" viewBox="0 0 5 3"><path d="M0 0h5L2.500 3z" fill="#000"/></svg>
<div class="sel" style="left:681px;top:71px;width:22px;height:22px"></div>
<svg class="a" style="left:684.0px;top:74.0px" width="16" height="16" viewBox="0 0 16 16"><path d="M4.500 1.500v12l3-3 2.500 5 2-1-2.500-4.500h4z" fill="#fff" stroke="#000" stroke-width="1.100"/></svg>
<svg class="a" style="left:706.0px;top:74.0px" width="16" height="16" viewBox="0 0 16 16"><rect x="3.500" y="2.500" width="9" height="11" rx="1" fill="#7CE0E8" stroke="#1C7888"/><rect x="6" y="5" width="4" height="6" fill="#E8FCFC" stroke="#1C7888" stroke-width="0.800"/><path d="M1 5h2.500M1 8h2.500M1 11h2.500M12.500 5h2.500M12.500 8h2.500M12.500 11h2.500" stroke="#1C7888" stroke-width="1.300"/></svg>
<svg class="a" style="left:728.0px;top:74.0px" width="16" height="16" viewBox="0 0 16 16"><path d="M2.500 15V4.500h6v5h6" fill="none" stroke="#1C6C1C" stroke-width="3.200"/><path d="M2.500 15V4.500h6v5h6" fill="none" stroke="#58C858" stroke-width="1.400"/></svg>
<svg class="a" style="left:750.5px;top:74.0px" width="16" height="16" viewBox="0 0 16 16"><path d="M1 13h3.500V4h6v6h4.500" fill="none" stroke="#8A7000" stroke-width="4"/><path d="M1 13h3.500V4h6v6h4.500" fill="none" stroke="#F8E020" stroke-width="2.200"/></svg>
<svg class="a" style="left:774.0px;top:74.0px" width="16" height="16" viewBox="0 0 16 16"><rect x="2.500" y="0.500" width="11" height="6" rx="3" fill="#7CE0E8" stroke="#1C7888"/><path d="M6 2v3M8 2v3M10 2v3" stroke="#1C7888"/><path d="M4 12.500h6" stroke="#C02020" stroke-width="1.500"/><circle cx="3" cy="12.500" r="1.500" fill="#C02020"/><circle cx="12" cy="12.500" r="2.500" fill="#fff" stroke="#2848B8" stroke-width="1.500"/></svg>
<svg class="a" style="left:795.5px;top:81px" width="5" height="3" viewBox="0 0 5 3"><path d="M0 0h5L2.500 3z" fill="#000"/></svg>
<svg class="a" style="left:807.0px;top:74.0px" width="16" height="16" viewBox="0 0 16 16"><path d="M1 13h4l5-8h5M1 10h3l5-8" fill="none" stroke="#2838A8" stroke-width="1.600"/><rect x="9.500" y="1.500" width="5" height="4" fill="#A8B8E8" stroke="#2838A8"/><rect x="4.500" y="9.500" width="5" height="4" fill="#A8B8E8" stroke="#2838A8"/><path d="M1 7h6M9 9h5" stroke="#606060" stroke-width="1.200"/></svg>
<svg class="a" style="left:829.0px;top:74.0px" width="16" height="16" viewBox="0 0 16 16"><path d="M3 1.500C15 2 15 14 3 14.500" fill="none" stroke="#222" stroke-width="1.200"/></svg>
<svg class="a" style="left:851.0px;top:74.0px" width="16" height="16" viewBox="0 0 16 16"><rect x="1.500" y="3.500" width="13" height="9" fill="none" stroke="#222" stroke-width="1.100"/></svg>
<svg class="a" style="left:873.0px;top:74.0px" width="16" height="16" viewBox="0 0 16 16"><circle cx="8" cy="8" r="6.300" fill="none" stroke="#222" stroke-width="1.100"/></svg>
<svg class="a" style="left:894.5px;top:74.0px" width="16" height="16" viewBox="0 0 16 16"><path d="M2 2l12 12" stroke="#222" stroke-width="1.100"/></svg>
<svg class="a" style="left:916.5px;top:74.0px" width="16" height="16" viewBox="0 0 16 16"><text x="1.500" y="14" font-family="Liberation Serif, serif" font-size="15" font-weight="bold" fill="#222">A</text></svg>
<svg class="a" style="left:939.0px;top:74.0px" width="16" height="16" viewBox="0 0 16 16"><rect x="2.500" y="1.500" width="11" height="6" fill="#48A848" stroke="#186018"/><text x="3" y="7" font-family="Liberation Sans, sans-serif" font-size="5.500" font-weight="bold" fill="#fff">TXT</text><path d="M5 6l4 6M11 6L7 12" stroke="#3A4A9A" stroke-width="1.500"/><circle cx="5.500" cy="13" r="2" fill="none" stroke="#3A5CC0" stroke-width="1.500"/><circle cx="10.500" cy="13" r="2" fill="none" stroke="#3A5CC0" stroke-width="1.500"/></svg>
<svg class="a" style="left:961.0px;top:74.0px" width="16" height="16" viewBox="0 0 16 16"><path d="M1 4.500h3v-3h3v3h3v3h-3v3h-3v-3h-3z" fill="#F8E020" stroke="#806800" stroke-width="0.900"/><rect x="6.500" y="10.500" width="8" height="4" rx="2" fill="#7CE0E8" stroke="#1C7888"/><path d="M10 3c3 0 4 2 4 5M12 6.500l2 2 1.500-2" fill="none" stroke="#333" stroke-width="1"/></svg>
<div class="a" style="left:1006px;top:74px;width:93px;height:18px;background:#fff"></div>
<div class="a" style="left:1088px;top:75px;width:11px;height:16px;background:linear-gradient(#F2F0E6,#C8C5B4)"></div>
<svg class="a" style="left:1091.0px;top:81px" width="5" height="3" viewBox="0 0 5 3"><path d="M0 0h5L2.500 3z" fill="#000"/></svg>
<div class="t " style="left:1008.5px;top:77px;font-size:11px;letter-spacing:-0.109px;color:#111">0.10000</div>
<div class="t " style="left:1106px;top:77px;font-size:12px;color:#B0AE9E">in</div>
<div class="sep" style="left:1124px;top:76px;height:15px"></div>
<div class="sel" style="left:1128px;top:71px;width:22px;height:22px"></div>
<svg class="a" style="left:1131.0px;top:74.0px" width="16" height="16" viewBox="0 0 16 16"><g fill="#111"><rect x="2" y="2" width="2" height="2"/><rect x="7" y="2" width="2" height="2"/><rect x="12" y="2" width="2" height="2"/><rect x="2" y="7" width="2" height="2"/><rect x="7" y="7" width="2" height="2"/><rect x="12" y="7" width="2" height="2"/><rect x="2" y="12" width="2" height="2"/><rect x="7" y="12" width="2" height="2"/><rect x="12" y="12" width="2" height="2"/></g></svg>
<div class="a" style="left:1067px;top:23px;width:104px;height:25px;border-radius:3px;border:1px solid #3A8ED0;background:linear-gradient(90deg,#2B95E0 0,#2B95E0 29px,#8FCDF5 29px,#9DD3F6 54px,#C0E0F8 54px,#B8DCF7 100%)"></div>
<svg class="a" style="left:1071px;top:26px" width="24" height="20" viewBox="0 0 24 20"><circle cx="7.500" cy="12.500" r="3.400" fill="none" stroke="#fff" stroke-width="3"/><circle cx="13" cy="8" r="3.400" fill="none" stroke="#fff" stroke-width="3"/><path d="M16 10.500q4 0 4.500 4" fill="none" stroke="#fff" stroke-width="2.800" stroke-linecap="round"/><circle cx="20.500" cy="17.500" r="1.400" fill="#fff"/></svg>
<svg class="a" style="left:1099px;top:30px" width="9" height="11" viewBox="0 0 9 11"><path d="M3 0h3v5h3l-4.5 5L0 5h3z" fill="#1670B8"/></svg>
<div class="t mono" style="left:1111.5px;top:29px;font-size:12px;color:#1C5E8E;letter-spacing:-1.35px">199 KB/s</div>
<div class="hdr" style="left:0px;top:96px;width:197px;height:16px;"></div>
<div class="t " style="left:2px;top:98px;font-size:11px;letter-spacing:-0.120px;color:#333">Navigator</div>
<div class="t " style="left:133px;top:96px;font-size:14px;font-weight:bold">?</div>
<svg class="a" style="left:150.0px;top:101.5px" width="9" height="5" viewBox="0 0 9 5"><path d="M0 0h9L4.5 5z" fill="#000"/></svg>
<svg class="a" style="left:167.5px;top:99px" width="8" height="10" viewBox="0 0 8 10"><path d="M2 0.5h4M2.5 0.5v5M5.5 0.5v5M4.8 0.5v5M0.5 5.5h7M4 6v4" stroke="#000" stroke-width="1" fill="none"/></svg>
<svg class="a" style="left:183.5px;top:100.0px" width="8" height="8" viewBox="0 0 8 8"><path d="M0.7 0.7L7.3 7.3M7.3 0.7L0.7 7.3" stroke="#000" stroke-width="1.7"/></svg>
<div class="a" style="left:0px;top:112px;width:197px;height:23px;background:#EDEADA"></div>
<div class="a" style="left:62px;top:134px;width:134px;height:1px;background:#ACA899"></div>
<div class="a" style="left:0px;top:113px;width:62px;height:22px;background:#fff;border-top:3px solid #F3A22C;border-right:1px solid #6E7A7A;border-radius:2px 2px 0 0"></div>
<svg class="a" style="left:6px;top:115px" width="18" height="16" viewBox="0 0 18 16"><path d="M2.5 3v10.5h5M2.5 8.5h4M9 10.5h3" stroke="#000" stroke-width="1.2" fill="none"/><rect x="0.5" y="0.5" width="4" height="4" fill="#3FD0D8" stroke="#000"/><rect x="6.5" y="6.500" width="4" height="4" fill="#3FD0D8" stroke="#000"/><rect x="7.5" y="11.5" width="4" height="4" fill="#fff" stroke="#000"/><rect x="12.5" y="8.5" width="4" height="4" fill="#3FD0D8" stroke="#000"/></svg>
<div class="t " style="left:28px;top:118px;font-size:12px;font-weight:bold;letter-spacing:1px">项目</div>
<div class="a" style="left:0px;top:135px;width:196px;height:260px;background:#fff;border-right:1px solid #D8D5C8;border-bottom:1px solid #C4C1B0"></div>
<div class="a" style="left:9px;top:135px;width:1px;height:242px;background:repeating-linear-gradient(#999 0 1px,transparent 1px 2px)"></div>
<div class="a" style="left:66px;top:135px;width:1px;height:242px;background:repeating-linear-gradient(#999 0 1px,transparent 1px 2px)"></div>
<div class="a" style="left:85px;top:135px;width:1px;height:85px;background:repeating-linear-gradient(#999 0 1px,transparent 1px 2px)"></div>
<div class="a" style="left:104px;top:135px;width:1px;height:74px;background:repeating-linear-gradient(#999 0 1px,transparent 1px 2px)"></div>
<div class="a" style="left:104px;top:232px;width:1px;height:145px;background:repeating-linear-gradient(#999 0 1px,transparent 1px 2px)"></div>
<div class="a" style="left:105px;top:144px;width:11px;height:1px;background:repeating-linear-gradient(90deg,#999 0 1px,transparent 1px 2px)"></div>
<svg class="a" style="left:116px;top:137px" width="14" height="15" viewBox="0 0 14 15"><rect x="3.500" y="1.5" width="8" height="12" fill="#fff" stroke="#000"/><path d="M1 3.500h2.500M1 11.5h2.500M11.5 2.500h2.500M3.500 8.500l3 2-3 2" stroke="#000" fill="none"/></svg>
<div class="t " style="left:135px;top:139px;font-size:12px;font-family:'Liberation Mono',monospace;letter-spacing:-1.2px">$1I109</div>
<div class="a" style="left:105px;top:160px;width:11px;height:1px;background:repeating-linear-gradient(90deg,#999 0 1px,transparent 1px 2px)"></div>
<svg class="a" style="left:116px;top:153px" width="14" height="15" viewBox="0 0 14 15"><rect x="3.500" y="1.5" width="8" height="12" fill="#fff" stroke="#000"/><path d="M1 3.500h2.500M1 11.5h2.500M11.5 2.500h2.500M3.500 8.500l3 2-3 2" stroke="#000" fill="none"/></svg>
<div class="t " style="left:135px;top:155px;font-size:12px;font-family:'Liberation Mono',monospace;letter-spacing:-1.2px">$1I132</div>
<div class="a" style="left:105px;top:176px;width:11px;height:1px;background:repeating-linear-gradient(90deg,#999 0 1px,transparent 1px 2px)"></div>
<svg class="a" style="left:116px;top:169px" width="14" height="15" viewBox="0 0 14 15"><rect x="3.500" y="1.5" width="8" height="12" fill="#fff" stroke="#000"/><path d="M1 3.500h2.500M1 11.5h2.500M11.5 2.500h2.500M3.500 8.500l3 2-3 2" stroke="#000" fill="none"/></svg>
<div class="t " style="left:135px;top:171px;font-size:12px;font-family:'Liberation Mono',monospace;letter-spacing:-1.2px">$1I155</div>
<div class="a" style="left:105px;top:192px;width:11px;height:1px;background:repeating-linear-gradient(90deg,#999 0 1px,transparent 1px 2px)"></div>
<svg class="a" style="left:116px;top:185px" width="14" height="15" viewBox="0 0 14 15"><rect x="3.500" y="1.5" width="8" height="12" fill="#fff" stroke="#000"/><path d="M1 3.500h2.500M1 11.5h2.500M11.5 2.500h2.500M3.500 8.500l3 2-3 2" stroke="#000" fill="none"/></svg>
<div class="t " style="left:135px;top:187px;font-size:12px;font-family:'Liberation Mono',monospace;letter-spacing:-1.2px">$1I160</div>
<div class="a" style="left:105px;top:208px;width:11px;height:1px;background:repeating-linear-gradient(90deg,#999 0 1px,transparent 1px 2px)"></div>
<svg class="a" style="left:116px;top:201px" width="14" height="15" viewBox="0 0 14 15"><rect x="3.500" y="1.5" width="8" height="12" fill="#fff" stroke="#000"/><path d="M1 3.500h2.500M1 11.5h2.500M11.5 2.500h2.500M3.500 8.500l3 2-3 2" stroke="#000" fill="none"/></svg>
<div class="t " style="left:135px;top:203px;font-size:12px;font-family:'Liberation Mono',monospace;letter-spacing:-1.2px">$1I171</div>
<div class="a" style="left:86px;top:224px;width:10px;height:1px;background:repeating-linear-gradient(90deg,#999 0 1px,transparent 1px 2px)"></div>
<div class="a" style="left:81px;top:220px;width:9px;height:9px;background:linear-gradient(135deg,#fff,#D8D4C4);border:1px solid #8A9CB0;border-radius:1px"></div>
<div class="a" style="left:83px;top:224px;width:5px;height:1px;background:#000"></div>
<svg class="a" style="left:97px;top:216px" width="16" height="15" viewBox="0 0 16 15"><path d="M1 4q0-2 2-2.500l3-0.500 2 2h5q1 0 1 1v8h-11z" fill="#2878D8" stroke="#0A1A5A"/><path d="M1 5.500l7 0.500 1.500-1 4 0 0 7.500h-10.500z" fill="#40D0F0" stroke="#0A1A5A" stroke-width="0.800"/></svg>
<div class="t " style="left:117px;top:219px;font-size:12px;font-family:'Liberation Mono',monospace;letter-spacing:-1.2px">Nets</div>
<div class="a" style="left:105px;top:240px;width:11px;height:1px;background:repeating-linear-gradient(90deg,#999 0 1px,transparent 1px 2px)"></div>
<svg class="a" style="left:116px;top:232px" width="15" height="15" viewBox="0 0 15 15"><path d="M2.500 12L11 3.500" stroke="#000" stroke-width="1.200"/><circle cx="2" cy="12.500" r="1.700" fill="#5FE0E0" stroke="#107070"/><path d="M6.500 3.500l4.500 4.500M10.500 4L7 7.500" stroke="#000" stroke-width="1.300"/><circle cx="11.500" cy="3" r="1.700" fill="#5FE0E0" stroke="#107070"/></svg>
<div class="t " style="left:135px;top:235px;font-size:12px;font-family:'Liberation Mono',monospace;letter-spacing:-1.2px">$1N57</div>
<div class="a" style="left:105px;top:256px;width:11px;height:1px;background:repeating-linear-gradient(90deg,#999 0 1px,transparent 1px 2px)"></div>
<svg class="a" style="left:116px;top:248px" width="15" height="15" viewBox="0 0 15 15"><path d="M2.500 12L11 3.500" stroke="#000" stroke-width="1.200"/><circle cx="2" cy="12.500" r="1.700" fill="#5FE0E0" stroke="#107070"/><path d="M6.500 3.500l4.500 4.500M10.500 4L7 7.500" stroke="#000" stroke-width="1.300"/><circle cx="11.500" cy="3" r="1.700" fill="#5FE0E0" stroke="#107070"/></svg>
<div class="t " style="left:135px;top:251px;font-size:12px;font-family:'Liberation Mono',monospace;letter-spacing:-1.2px">$1N59</div>
<div class="a" style="left:105px;top:272px;width:11px;height:1px;background:repeating-linear-gradient(90deg,#999 0 1px,transparent 1px 2px)"></div>
<svg class="a" style="left:116px;top:264px" width="15" height="15" viewBox="0 0 15 15"><path d="M2.500 12L11 3.500" stroke="#000" stroke-width="1.200"/><circle cx="2" cy="12.500" r="1.700" fill="#5FE0E0" stroke="#107070"/><path d="M6.500 3.500l4.500 4.500M10.500 4L7 7.500" stroke="#000" stroke-width="1.300"/><circle cx="11.500" cy="3" r="1.700" fill="#5FE0E0" stroke="#107070"/></svg>
<div class="t " style="left:135px;top:267px;font-size:12px;font-family:'Liberation Mono',monospace;letter-spacing:-1.2px">$1N61</div>
<div class="a" style="left:105px;top:288px;width:11px;height:1px;background:repeating-linear-gradient(90deg,#999 0 1px,transparent 1px 2px)"></div>
<svg class="a" style="left:116px;top:280px" width="15" height="15" viewBox="0 0 15 15"><path d="M2.500 12L11 3.500" stroke="#000" stroke-width="1.200"/><circle cx="2" cy="12.500" r="1.700" fill="#5FE0E0" stroke="#107070"/><path d="M6.500 3.500l4.500 4.500M10.500 4L7 7.500" stroke="#000" stroke-width="1.300"/><circle cx="11.500" cy="3" r="1.700" fill="#5FE0E0" stroke="#107070"/></svg>
<div class="t " style="left:135px;top:283px;font-size:12px;font-family:'Liberation Mono',monospace;letter-spacing:-1.2px">$1N65</div>
<div class="a" style="left:105px;top:304px;width:11px;height:1px;background:repeating-linear-gradient(90deg,#999 0 1px,transparent 1px 2px)"></div>
<svg class="a" style="left:116px;top:296px" width="15" height="15" viewBox="0 0 15 15"><path d="M2.500 12L11 3.500" stroke="#000" stroke-width="1.200"/><circle cx="2" cy="12.500" r="1.700" fill="#5FE0E0" stroke="#107070"/><path d="M6.500 3.500l4.500 4.500M10.500 4L7 7.500" stroke="#000" stroke-width="1.300"/><circle cx="11.500" cy="3" r="1.700" fill="#5FE0E0" stroke="#107070"/></svg>
<div class="t " style="left:135px;top:299px;font-size:12px;font-family:'Liberation Mono',monospace;letter-spacing:-1.2px">$1N69</div>
<div class="a" style="left:105px;top:320px;width:11px;height:1px;background:repeating-linear-gradient(90deg,#999 0 1px,transparent 1px 2px)"></div>
<svg class="a" style="left:116px;top:312px" width="15" height="15" viewBox="0 0 15 15"><path d="M2.500 12L11 3.500" stroke="#000" stroke-width="1.200"/><circle cx="2" cy="12.500" r="1.700" fill="#5FE0E0" stroke="#107070"/><path d="M6.500 3.500l4.500 4.500M10.500 4L7 7.500" stroke="#000" stroke-width="1.300"/><circle cx="11.500" cy="3" r="1.700" fill="#5FE0E0" stroke="#107070"/></svg>
<div class="t " style="left:135px;top:315px;font-size:12px;font-family:'Liberation Mono',monospace;letter-spacing:-1.2px">$1N184</div>
<div class="a" style="left:105px;top:336px;width:11px;height:1px;background:repeating-linear-gradient(90deg,#999 0 1px,transparent 1px 2px)"></div>
<svg class="a" style="left:116px;top:328px" width="15" height="15" viewBox="0 0 15 15"><path d="M2.500 12L11 3.500" stroke="#000" stroke-width="1.200"/><circle cx="2" cy="12.500" r="1.700" fill="#5FE0E0" stroke="#107070"/><path d="M6.500 3.500l4.500 4.500M10.500 4L7 7.500" stroke="#000" stroke-width="1.300"/><circle cx="11.500" cy="3" r="1.700" fill="#5FE0E0" stroke="#107070"/></svg>
<div class="t " style="left:135px;top:331px;font-size:12px;font-family:'Liberation Mono',monospace;letter-spacing:-1.2px">$1N186</div>
<div class="a" style="left:105px;top:352px;width:11px;height:1px;background:repeating-linear-gradient(90deg,#999 0 1px,transparent 1px 2px)"></div>
<svg class="a" style="left:116px;top:344px" width="15" height="15" viewBox="0 0 15 15"><path d="M2.500 12L11 3.500" stroke="#000" stroke-width="1.200"/><circle cx="2" cy="12.500" r="1.700" fill="#5FE0E0" stroke="#107070"/><path d="M6.500 3.500l4.500 4.500M10.500 4L7 7.500" stroke="#000" stroke-width="1.300"/><circle cx="11.500" cy="3" r="1.700" fill="#5FE0E0" stroke="#107070"/></svg>
<div class="t " style="left:135px;top:347px;font-size:12px;font-family:'Liberation Mono',monospace;letter-spacing:-1.2px">$1N192</div>
<div class="a" style="left:105px;top:368px;width:11px;height:1px;background:repeating-linear-gradient(90deg,#999 0 1px,transparent 1px 2px)"></div>
<svg class="a" style="left:116px;top:360px" width="15" height="15" viewBox="0 0 15 15"><path d="M2.500 12L11 3.500" stroke="#000" stroke-width="1.200"/><circle cx="2" cy="12.500" r="1.700" fill="#5FE0E0" stroke="#107070"/><path d="M6.500 3.500l4.500 4.500M10.500 4L7 7.500" stroke="#000" stroke-width="1.300"/><circle cx="11.500" cy="3" r="1.700" fill="#5FE0E0" stroke="#107070"/></svg>
<div class="a" style="left:133px;top:360px;width:32px;height:16px;background:#ECE9D8"></div>
<div class="t " style="left:137px;top:363px;font-size:12px;font-family:'Liberation Mono',monospace;letter-spacing:-1.2px">conn</div>
<div class="a" style="left:178px;top:135px;width:17px;height:242px;background:linear-gradient(90deg,#F3F1EC,#FEFEFB)"></div>
<div class="a" style="left:178px;top:137px;width:14px;height:14px;background:linear-gradient(135deg,#CBD9FA,#B4C8F4);border:1px solid #EEF3FE;border-radius:3px;box-shadow:1px 1px 1px #8A9CC8"></div>
<svg class="a" style="left:178.0px;top:137.0px" width="14" height="14" viewBox="-7 -7 14 14"><path d="M-4 2L0 -2L4 2" stroke="#4D6185" stroke-width="2.2" fill="none"/></svg>
<div class="a" style="left:178px;top:360px;width:14px;height:14px;background:linear-gradient(135deg,#CBD9FA,#B4C8F4);border:1px solid #EEF3FE;border-radius:3px;box-shadow:1px 1px 1px #8A9CC8"></div>
<svg class="a" style="left:178.0px;top:360.0px" width="14" height="14" viewBox="-7 -7 14 14"><path d="M-4 -2L0 2L4 -2" stroke="#4D6185" stroke-width="2.2" fill="none"/></svg>
<div class="a" style="left:178px;top:251px;width:14px;height:89px;background:linear-gradient(90deg,#C9D8FC,#BACCF6);border:1px solid #EEF3FE;border-radius:3px;box-shadow:1px 1px 1px #8A9CC8"></div>
<div class="a" style="left:182.0px;top:291.5px;width:6px;height:1px;background:#8CA0CE"></div>
<div class="a" style="left:182.0px;top:293.5px;width:6px;height:1px;background:#8CA0CE"></div>
<div class="a" style="left:182.0px;top:295.5px;width:6px;height:1px;background:#8CA0CE"></div>
<div class="a" style="left:182.0px;top:297.5px;width:6px;height:1px;background:#8CA0CE"></div>
<div class="a" style="left:0px;top:377px;width:196px;height:17px;background:linear-gradient(180deg,#F3F1EC,#FEFEFB)"></div>
<div class="a" style="left:3px;top:378px;width:15px;height:14px;background:linear-gradient(135deg,#CBD9FA,#B4C8F4);border:1px solid #EEF3FE;border-radius:3px;box-shadow:1px 1px 1px #8A9CC8"></div>
<svg class="a" style="left:3.5px;top:378.0px" width="14" height="14" viewBox="-7 -7 14 14"><path d="M2 -4L-2 0L2 4" stroke="#4D6185" stroke-width="2.2" fill="none"/></svg>
<div class="a" style="left:161px;top:378px;width:15px;height:14px;background:linear-gradient(135deg,#CBD9FA,#B4C8F4);border:1px solid #EEF3FE;border-radius:3px;box-shadow:1px 1px 1px #8A9CC8"></div>
<svg class="a" style="left:161.5px;top:378.0px" width="14" height="14" viewBox="-7 -7 14 14"><path d="M-2 -4L2 0L-2 4" stroke="#4D6185" stroke-width="2.2" fill="none"/></svg>
<div class="a" style="left:36px;top:378px;width:122px;height:14px;background:linear-gradient(180deg,#C9D8FC,#BACCF6);border:1px solid #EEF3FE;border-radius:3px;box-shadow:1px 1px 1px #8A9CC8"></div>
<div class="a" style="left:93.0px;top:382.0px;width:1px;height:6px;background:#8CA0CE"></div>
<div class="a" style="left:95.0px;top:382.0px;width:1px;height:6px;background:#8CA0CE"></div>
<div class="a" style="left:97.0px;top:382.0px;width:1px;height:6px;background:#8CA0CE"></div>
<div class="a" style="left:99.0px;top:382.0px;width:1px;height:6px;background:#8CA0CE"></div>
<div class="hdr" style="left:1086px;top:96px;width:191px;height:16px;"></div>
<div class="t " style="left:1089.5px;top:98px;font-size:11px;letter-spacing:-0.163px;color:#222">Properties</div>
<svg class="a" style="left:1231.0px;top:101.5px" width="9" height="5" viewBox="0 0 9 5"><path d="M0 0h9L4.5 5z" fill="#000"/></svg>
<svg class="a" style="left:1248px;top:99px" width="8" height="10" viewBox="0 0 8 10"><path d="M2 0.5h4M2.5 0.5v5M5.5 0.5v5M4.8 0.5v5M0.5 5.5h7M4 6v4" stroke="#000" stroke-width="1" fill="none"/></svg>
<svg class="a" style="left:1264.0px;top:100.0px" width="8" height="8" viewBox="0 0 8 8"><path d="M0.7 0.7L7.3 7.3M7.3 0.7L0.7 7.3" stroke="#000" stroke-width="1.7"/></svg>
<div class="a" style="left:1088px;top:112px;width:187px;height:480px;background:#fff"></div>
<div class="a" style="left:1089px;top:591px;width:186px;height:69px;background:#ECE9D8;border-top:1px solid #ACA899;border-left:1px solid #ACA899"></div>
<div class="a" style="left:1088px;top:113px;width:189px;height:1px;background:repeating-linear-gradient(90deg,#999 0 1px,transparent 1px 2px)"></div>
<div class="a" style="left:1088px;top:135px;width:189px;height:1px;background:#808080"></div>
<div class="a" style="left:1088px;top:157px;width:189px;height:1px;background:repeating-linear-gradient(90deg,#999 0 1px,transparent 1px 2px)"></div>
<div class="a" style="left:1088px;top:179px;width:189px;height:1px;background:repeating-linear-gradient(90deg,#999 0 1px,transparent 1px 2px)"></div>
<div class="a" style="left:1088px;top:201px;width:189px;height:1px;background:repeating-linear-gradient(90deg,#999 0 1px,transparent 1px 2px)"></div>
<div class="a" style="left:1088px;top:223px;width:189px;height:1px;background:repeating-linear-gradient(90deg,#999 0 1px,transparent 1px 2px)"></div>
<div class="a" style="left:1088px;top:245px;width:189px;height:1px;background:repeating-linear-gradient(90deg,#999 0 1px,transparent 1px 2px)"></div>
<div class="a" style="left:1088px;top:267px;width:189px;height:1px;background:repeating-linear-gradient(90deg,#999 0 1px,transparent 1px 2px)"></div>
<div class="a" style="left:1088px;top:289px;width:189px;height:1px;background:repeating-linear-gradient(90deg,#999 0 1px,transparent 1px 2px)"></div>
<div class="a" style="left:1088px;top:310px;width:189px;height:1px;background:#808080"></div>
<div class="a" style="left:1182px;top:114px;width:1px;height:196px;background:#808080"></div>
<div class="t " style="left:1113px;top:119.5px;font-size:11px;letter-spacing:0.553px;color:#222">Property</div>
<div class="t " style="left:1211px;top:119.5px;font-size:11px;letter-spacing:0.437px;color:#222">Value</div>
<div class="t " style="left:1113px;top:141.5px;font-size:11px;letter-spacing:0.165px;color:#222">Name</div>
<div class="t " style="left:1207px;top:141.5px;font-size:11px;letter-spacing:0.537px;color:#222">conn</div>
<div class="t " style="left:1113px;top:163.5px;font-size:11px;letter-spacing:0.163px;color:#222">Id</div>
<div class="t " style="left:1207px;top:163.5px;font-size:11px;letter-spacing:0.695px;color:#222">$1N188</div>
<div class="t " style="left:1113px;top:185.5px;font-size:11px;letter-spacing:0.554px;color:#222">Name Invert</div>
<div class="t " style="left:1207px;top:185.5px;font-size:11px;letter-spacing:-0.459px;color:#222">False</div>
<div class="t " style="left:1113px;top:207.5px;font-size:11px;letter-spacing:0.287px;color:#222">Diff Pair</div>
<div class="t " style="left:1113px;top:229.5px;font-size:11px;letter-spacing:-0.057px;color:#222">Color</div>
<div class="a" style="left:1206px;top:226.5px;width:66px;height:17px;background:#00E000"></div>
<div class="t " style="left:1212px;top:229.5px;font-size:11px;letter-spacing:0.621px;color:#222">Automatic</div>
<div class="t " style="left:1113px;top:251.5px;font-size:11px;letter-spacing:0.409px;color:#222">Line Style</div>
<div class="t " style="left:1207px;top:251.5px;font-size:11px;letter-spacing:0.527px;color:#222">Solid (Autor</div>
<div class="t " style="left:1113px;top:273.5px;font-size:11px;letter-spacing:0.593px;color:#222">Line Width</div>
<div class="t " style="left:1207px;top:273.5px;font-size:11px;letter-spacing:1.000px;color:#222">1 (Automat</div>
<div class="a" style="left:1187px;top:139px;width:13px;height:13px;background:#fff;border:1px solid #1C5180"></div>
<svg class="a" style="left:1189px;top:141px" width="9" height="9" viewBox="0 0 9 9"><path d="M1 4l2.500 3L8 1.500" stroke="#21A121" stroke-width="1.800" fill="none"/></svg>
<div class="t " style="left:1207px;top:141px;font-size:12px;"></div>
<div class="a" style="left:202px;top:118px;width:880px;height:280px;background:#C3D6F6;border:1px solid #8AA2C8"></div>
<div class="a" style="left:207px;top:122px;width:869px;height:271px;background:#F5F4EC;border-top:1px solid #E8EEF8"></div>
<svg class="a" style="left:209px;top:124px" width="849" height="250" viewBox="209 124 849 250"><rect x="209" y="124" width="849" height="250" fill="#000"/><line x1="288.5" y1="124" x2="288.5" y2="374" stroke="#444444" stroke-width="1"/><line x1="370.5" y1="124" x2="370.5" y2="374" stroke="#444444" stroke-width="1"/><line x1="453.5" y1="124" x2="453.5" y2="374" stroke="#444444" stroke-width="1"/><line x1="535.5" y1="124" x2="535.5" y2="374" stroke="#444444" stroke-width="1"/><line x1="617.5" y1="124" x2="617.5" y2="374" stroke="#444444" stroke-width="1"/><line x1="699.5" y1="124" x2="699.5" y2="374" stroke="#444444" stroke-width="1"/><line x1="781.5" y1="124" x2="781.5" y2="374" stroke="#444444" stroke-width="1"/><line x1="864.5" y1="124" x2="864.5" y2="374" stroke="#444444" stroke-width="1"/><line x1="946.5" y1="124" x2="946.5" y2="374" stroke="#444444" stroke-width="1"/><line x1="1028.5" y1="124" x2="1028.5" y2="374" stroke="#444444" stroke-width="1"/><line x1="209" y1="163.5" x2="1058" y2="163.5" stroke="#444444" stroke-width="1"/><line x1="209" y1="245.5" x2="1058" y2="245.5" stroke="#444444" stroke-width="1"/><line x1="209" y1="327.5" x2="1058" y2="327.5" stroke="#444444" stroke-width="1"/><path d="M451.7 124V374" stroke="#40DCDC" stroke-width="1.6" fill="none"/><text x="209" y="250" fill="#FFFF40" font-family="Liberation Mono, monospace" font-size="8" letter-spacing="2.9" stroke="#FFFF40" stroke-width="0.22" >4AC245</text><path d="M209 255.5H278.8V312.6H270.4V320.2" stroke="#40DCDC" stroke-width="1.1" fill="none"/><path d="M209 320.2H278.8V374" stroke="#40DCDC" stroke-width="1.1" fill="none"/><path d="M209 337.6H278.8M209 353.5H214M209 369.4H278.8" stroke="#40DCDC" stroke-width="1.1" fill="none"/><text x="211" y="288.4" fill="#FFFF40" font-family="Liberation Mono, monospace" font-size="8" letter-spacing="3.2" stroke="#FFFF40" stroke-width="0.22" >N1[BA]</text><text x="211" y="305.4" fill="#FFFF40" font-family="Liberation Mono, monospace" font-size="8" letter-spacing="3.2" stroke="#FFFF40" stroke-width="0.22" >N2[AB]</text><path d="M240.6 324.5L232.6 329L240.6 333.4Z" stroke="#40DCDC" stroke-width="1.1" fill="none"/><path d="M235.8 340.8L243.8 345.5L235.8 350.3Z" stroke="#40DCDC" stroke-width="1.1" fill="none"/><text x="261" y="345" fill="#FFFF40" font-family="Liberation Mono, monospace" font-size="7" letter-spacing="0" stroke="#FFFF40" stroke-width="0.22" >2</text><path d="M266 340.8H275.500L270.8 349Z" stroke="#40DCDC" stroke-width="1.1" fill="none"/><path d="M278.8 328.3H311.7M289.500 324L282 328.3L289.500 333" stroke="#40DCDC" stroke-width="1.1" fill="none"/><circle cx="295.6" cy="328.3" r="2.4" stroke="#40DCDC" stroke-width="1.1" fill="none"/><path d="M295.6 330.7V345.5M278.8 345.5H295.6M284 341L292 345.5L284 350" stroke="#40DCDC" stroke-width="1.1" fill="none"/><path d="M298.4 361.6H311.7" stroke="#40DCDC" stroke-width="1.1" fill="none"/><rect x="212" y="351.500" width="87" height="17" fill="#000"/><text x="214" y="366" fill="#F6EA3C" font-family="Liberation Sans, sans-serif" font-size="12.8">conn ($1N188)</text><path d="M298 359.500l3 2.100-3 2.100z" stroke="#40DCDC" stroke-width="1" fill="#40DCDC"/><text x="344.5" y="197.8" fill="#FFFF40" font-family="Liberation Mono, monospace" font-size="8" letter-spacing="3.1" stroke="#FFFF40" stroke-width="0.22" >74AC374</text><path d="M344.5 246.4V205.3H410.500V246.4H402.3V255.3M344.5 246.4H352.5V255.3" stroke="#40DCDC" stroke-width="1.1" fill="none"/><path d="M344.6 374V255.3H410.4V374" stroke="#40DCDC" stroke-width="1.1" fill="none"/><path d="M344.6 271.7H410.4" stroke="#40DCDC" stroke-width="1.1" fill="none"/><path d="M344.6 288.1H410.4" stroke="#40DCDC" stroke-width="1.1" fill="none"/><path d="M344.6 304.5H410.4" stroke="#40DCDC" stroke-width="1.1" fill="none"/><path d="M344.6 320.9H410.4" stroke="#40DCDC" stroke-width="1.1" fill="none"/><path d="M344.6 337.3H410.4" stroke="#40DCDC" stroke-width="1.1" fill="none"/><path d="M344.6 353.7H410.4" stroke="#40DCDC" stroke-width="1.1" fill="none"/><path d="M344.6 370.1H410.4" stroke="#40DCDC" stroke-width="1.1" fill="none"/><path d="M328 263.3H344.6M410.4 263.3H426.7" stroke="#40DCDC" stroke-width="1.1" fill="none"/><path d="M328 279.6H344.6M410.4 279.6H426.7" stroke="#40DCDC" stroke-width="1.1" fill="none"/><path d="M328 296H344.6M410.4 296H426.7" stroke="#40DCDC" stroke-width="1.1" fill="none"/><path d="M328 312.4H344.6M410.4 312.4H426.7" stroke="#40DCDC" stroke-width="1.1" fill="none"/><path d="M328 328.7H344.6M410.4 328.7H426.7" stroke="#40DCDC" stroke-width="1.1" fill="none"/><path d="M328 345.3H344.6M410.4 345.3H426.7" stroke="#40DCDC" stroke-width="1.1" fill="none"/><path d="M328 361.6H344.6M410.4 361.6H426.7" stroke="#40DCDC" stroke-width="1.1" fill="none"/><path d="M328 222.5H336.3" stroke="#40DCDC" stroke-width="1.1" fill="none"/><circle cx="340.4" cy="222.5" r="4" stroke="#40DCDC" stroke-width="1.1" fill="none"/><path d="M328 238.2H344.5M344.5 233L357 238.2L344.5 243.5" stroke="#40DCDC" stroke-width="1.1" fill="none"/><text x="350.5" y="223.3" fill="#FFFF40" font-family="Liberation Mono, monospace" font-size="8" letter-spacing="3" stroke="#FFFF40" stroke-width="0.22" >EN</text><text x="363" y="240.5" fill="#FFFF40" font-family="Liberation Mono, monospace" font-size="8" letter-spacing="2.5" stroke="#FFFF40" stroke-width="0.22" >C1</text><text x="351" y="264" fill="#FFFF40" font-family="Liberation Mono, monospace" font-size="8" letter-spacing="2.5" stroke="#FFFF40" stroke-width="0.22" >1D</text><path d="M375.4 258.7L384 263.6L375.4 268.6Z" stroke="#40DCDC" stroke-width="1.1" fill="none"/><path d="M397 258.3H407.6L402.3 267.5Z" stroke="#40DCDC" stroke-width="1.1" fill="none"/><text x="484.6" y="228.6" fill="#FFFF40" font-family="Liberation Mono, monospace" font-size="8" letter-spacing="3.1" stroke="#FFFF40" stroke-width="0.22" >74LS74</text><path d="M484.6 230.3H534V312.5H484.6Z" stroke="#40DCDC" stroke-width="1.1" fill="none"/><path d="M452 246.3H476.3M452.5 246.3V263.2M452 263.2H472" stroke="#30C030" stroke-width="1.2" fill="none"/><path d="M472 263.2H484.6" stroke="#40DCDC" stroke-width="1.1" fill="none"/><circle cx="480.3" cy="246.3" r="4" stroke="#40DCDC" stroke-width="1.1" fill="none"/><path d="M484.6 258L497.500 263.2L484.6 268.5" stroke="#40DCDC" stroke-width="1.1" fill="none"/><text x="491" y="247" fill="#FFFF40" font-family="Liberation Mono, monospace" font-size="8" letter-spacing="2.9" stroke="#FFFF40" stroke-width="0.22" >S</text><text x="502" y="266" fill="#FFFF40" font-family="Liberation Mono, monospace" font-size="8" letter-spacing="2.5" stroke="#FFFF40" stroke-width="0.22" >C1</text><text x="491" y="280" fill="#FFFF40" font-family="Liberation Mono, monospace" font-size="8" letter-spacing="2.5" stroke="#FFFF40" stroke-width="0.22" >1D</text><text x="491" y="296.3" fill="#FFFF40" font-family="Liberation Mono, monospace" font-size="8" letter-spacing="2.9" stroke="#FFFF40" stroke-width="0.22" >R</text><path d="M468.2 279.6H484.6M468.2 296.5H476.3" stroke="#40DCDC" stroke-width="1.1" fill="none"/><circle cx="480.3" cy="296.5" r="4" stroke="#40DCDC" stroke-width="1.1" fill="none"/><path d="M534 255.6H550.8" stroke="#40DCDC" stroke-width="1.1" fill="none"/><circle cx="537.8" cy="287.4" r="4" stroke="#40DCDC" stroke-width="1.1" fill="none"/><path d="M541.8 287.4H558.4V271.7H582" stroke="#30C030" stroke-width="1.2" fill="none"/><path d="M582 265L589.6 271.7L582 278.5Z" stroke="#40DCDC" stroke-width="1" fill="#40DCDC"/><path d="M590.3 265V278.5" stroke="#40DCDC" stroke-width="1.1" fill="none"/><path d="M590 271.7H624.4V287.4H657.5" stroke="#30C030" stroke-width="1.2" fill="none"/><path d="M584 262l3.500-4M590 262l3.500-4M585.5 257.5h2.500v2M591.5 257.5h2.500v2" stroke="#FFFF40" stroke-width="0.9" fill="none"/><text x="568" y="285.6" fill="#FFFF40" font-family="Liberation Mono, monospace" font-size="8" letter-spacing="3" stroke="#FFFF40" stroke-width="0.22" >LED</text><path d="M592.5 280.500h2.500v2h-2.500zM592.5 284v3.500M592.5 285.5l2.500 2" stroke="#FFFF40" stroke-width="0.9" fill="none"/><path d="M632.3 222.3V214.4H667.100V221.9" stroke="#fff" stroke-width="1.2" fill="none"/><path d="M668 221.9H683" stroke="#fff" stroke-width="1.2" fill="none" stroke-dasharray="3.5 2.5"/><path d="M691 221.9H747.7" stroke="#fff" stroke-width="1.2" fill="none"/><text x="634" y="221.2" fill="#fff" font-family="Liberation Mono, monospace" font-size="8" letter-spacing="3.4" stroke="#fff" stroke-width="0.22" >conn</text><path d="M747.7 222.5V263.2H706.6" stroke="#30C030" stroke-width="1.2" fill="none"/><path d="M632.3 222.5V271.500H657.6" stroke="#30C030" stroke-width="1.2" fill="none"/><text x="657.6" y="236.6" fill="#FFFF40" font-family="Liberation Mono, monospace" font-size="8" letter-spacing="3.1" stroke="#FFFF40" stroke-width="0.22" >74LS74</text><path d="M657.6 238.6H706.6V320.5H657.6Z" stroke="#40DCDC" stroke-width="1.1" fill="none"/><path d="M640 255.6H649.3M640 304.4H649.3" stroke="#40DCDC" stroke-width="1.1" fill="none"/><circle cx="653.3" cy="255.6" r="4" stroke="#40DCDC" stroke-width="1.1" fill="none"/><circle cx="653.3" cy="304.4" r="4" stroke="#40DCDC" stroke-width="1.1" fill="none"/><path d="M657.6 266.5L671 271.6L657.6 277" stroke="#40DCDC" stroke-width="1.1" fill="none"/><text x="664.3" y="256" fill="#FFFF40" font-family="Liberation Mono, monospace" font-size="8" letter-spacing="2.9" stroke="#FFFF40" stroke-width="0.22" >S</text><text x="675" y="274.3" fill="#FFFF40" font-family="Liberation Mono, monospace" font-size="8" letter-spacing="2.5" stroke="#FFFF40" stroke-width="0.22" >C1</text><text x="664.3" y="288" fill="#FFFF40" font-family="Liberation Mono, monospace" font-size="8" letter-spacing="2.5" stroke="#FFFF40" stroke-width="0.22" >1D</text><text x="664.3" y="304.6" fill="#FFFF40" font-family="Liberation Mono, monospace" font-size="8" letter-spacing="2.9" stroke="#FFFF40" stroke-width="0.22" >R</text><circle cx="710.6" cy="296.5" r="4" stroke="#40DCDC" stroke-width="1.1" fill="none"/><path d="M714.6 296.5H723" stroke="#40DCDC" stroke-width="1.1" fill="none"/></svg>
<div class="a" style="left:1058px;top:124px;width:17px;height:250px;background:linear-gradient(90deg,#F3F1EC,#FEFEFB)"></div>
<div class="a" style="left:1059px;top:125px;width:14px;height:14px;background:linear-gradient(135deg,#CBD9FA,#B4C8F4);border:1px solid #EEF3FE;border-radius:3px;box-shadow:1px 1px 1px #8A9CC8"></div>
<svg class="a" style="left:1059.0px;top:125.0px" width="14" height="14" viewBox="-7 -7 14 14"><path d="M-4 2L0 -2L4 2" stroke="#4D6185" stroke-width="2.2" fill="none"/></svg>
<div class="a" style="left:1059px;top:358px;width:14px;height:14px;background:linear-gradient(135deg,#CBD9FA,#B4C8F4);border:1px solid #EEF3FE;border-radius:3px;box-shadow:1px 1px 1px #8A9CC8"></div>
<svg class="a" style="left:1059.0px;top:358.0px" width="14" height="14" viewBox="-7 -7 14 14"><path d="M-4 -2L0 2L4 -2" stroke="#4D6185" stroke-width="2.2" fill="none"/></svg>
<div class="a" style="left:1059px;top:229px;width:14px;height:60px;background:linear-gradient(90deg,#C9D8FC,#BACCF6);border:1px solid #EEF3FE;border-radius:3px;box-shadow:1px 1px 1px #8A9CC8"></div>
<div class="a" style="left:1063.0px;top:255.0px;width:6px;height:1px;background:#8CA0CE"></div>
<div class="a" style="left:1063.0px;top:257.0px;width:6px;height:1px;background:#8CA0CE"></div>
<div class="a" style="left:1063.0px;top:259.0px;width:6px;height:1px;background:#8CA0CE"></div>
<div class="a" style="left:1063.0px;top:261.0px;width:6px;height:1px;background:#8CA0CE"></div>
<div class="a" style="left:209px;top:374px;width:849px;height:17px;background:linear-gradient(180deg,#F3F1EC,#FEFEFB)"></div>
<div class="a" style="left:210px;top:375px;width:15px;height:14px;background:linear-gradient(135deg,#CBD9FA,#B4C8F4);border:1px solid #EEF3FE;border-radius:3px;box-shadow:1px 1px 1px #8A9CC8"></div>
<svg class="a" style="left:210.5px;top:375.0px" width="14" height="14" viewBox="-7 -7 14 14"><path d="M2 -4L-2 0L2 4" stroke="#4D6185" stroke-width="2.2" fill="none"/></svg>
<div class="a" style="left:1042px;top:375px;width:15px;height:14px;background:linear-gradient(135deg,#CBD9FA,#B4C8F4);border:1px solid #EEF3FE;border-radius:3px;box-shadow:1px 1px 1px #8A9CC8"></div>
<svg class="a" style="left:1042.5px;top:375.0px" width="14" height="14" viewBox="-7 -7 14 14"><path d="M-2 -4L2 0L-2 4" stroke="#4D6185" stroke-width="2.2" fill="none"/></svg>
<div class="a" style="left:697px;top:375px;width:343px;height:14px;background:linear-gradient(180deg,#C9D8FC,#BACCF6);border:1px solid #EEF3FE;border-radius:3px;box-shadow:1px 1px 1px #8A9CC8"></div>
<div class="a" style="left:864.5px;top:379.0px;width:1px;height:6px;background:#8CA0CE"></div>
<div class="a" style="left:866.5px;top:379.0px;width:1px;height:6px;background:#8CA0CE"></div>
<div class="a" style="left:868.5px;top:379.0px;width:1px;height:6px;background:#8CA0CE"></div>
<div class="a" style="left:870.5px;top:379.0px;width:1px;height:6px;background:#8CA0CE"></div>
<div class="a" style="left:1058px;top:374px;width:17px;height:17px;background:#F1EFE3"></div>
<svg class="a" style="left:200px;top:96px" width="460" height="24" viewBox="200 96 460 24"><defs><linearGradient id="tg" x1="0" y1="0" x2="0" y2="1"><stop offset="0" stop-color="#FFFFFF"/><stop offset="1" stop-color="#F1EFE2"/></linearGradient><linearGradient id="tga" x1="0" y1="0" x2="0" y2="1"><stop offset="0" stop-color="#FFFFFF"/><stop offset="0.4" stop-color="#EEF3FC"/><stop offset="1" stop-color="#C3D6F6"/></linearGradient></defs><path d="M203 118.500L225 99Q226.500 97.500 229 97.500H324Q327.500 97.500 327.500 101V118.500Z" fill="url(#tg)" stroke="#8A9AA8" stroke-width="1"/><path d="M327.500 118.500V101Q327.500 97.500 331 97.500H424V118.500Z" fill="url(#tg)" stroke="#8A9AA8" stroke-width="1"/><path d="M544 118.500V101Q544 97.500 547.500 97.500H647Q650.500 97.500 650.500 101V118.500Z" fill="url(#tg)" stroke="#8A9AA8" stroke-width="1"/><path d="M404 119.500L421 99Q422.500 97.500 425 97.500H540.500Q544 97.500 544 101V119.500Z" fill="url(#tga)" stroke="#8A9AA8" stroke-width="1"/><path d="M404.500 119.500H543.500" stroke="#C3D6F6" stroke-width="1.5"/><g transform="translate(232,99)"><path d="M0.500 0.500H9L12.500 4V15.500H0.500Z" fill="#fff" stroke="#000"/><path d="M9 0.500V4.500H12.500" fill="none" stroke="#000"/><path d="M2 3.500h4M4 5.500h4M4 7.500h4M2 9.500h4M2 11.500h4M4 13.500h6" stroke="#666" stroke-width="1"/></g><g transform="translate(335,99)"><rect width="16" height="16" fill="#6FA04A"/><rect x="0" y="0" width="8" height="5" fill="#4C8C3A"/><rect x="9" y="10" width="7" height="6" fill="#DDE8DD"/><path d="M2 14L12 3l3 2L5 16z" fill="#E8C848"/><path d="M12 3l2-2 2 2-1.500 2z" fill="#D0A020"/><path d="M1 13l3 3-3 0z" fill="#C03030"/></g><g transform="translate(423,99)"><path d="M5.500 2.500H15.500V15.500H5.500Z" fill="#fff" stroke="#000"/><path d="M13.500 4v10" stroke="#999"/><path d="M0.500 0.500H10.500V10.500H0.500Z" fill="#E8E070" stroke="#000"/><path d="M2 9L9 2" stroke="#807020" stroke-width="2"/><path d="M1 10l1.500-3 1.500 1.500z" fill="#000"/></g><g transform="translate(552,99)"><path d="M5.500 2.500H15.500V15.500H5.500Z" fill="#fff" stroke="#000"/><path d="M13.500 4v10" stroke="#999"/><path d="M0.500 0.500H10.500V10.500H0.500Z" fill="#E8E070" stroke="#000"/><path d="M2 9L9 2" stroke="#807020" stroke-width="2"/><path d="M1 10l1.500-3 1.500 1.500z" fill="#000"/></g></svg>
<div class="t " style="left:250px;top:103px;font-size:11px;letter-spacing:0.198px;color:#222">...Bindings.txt</div>
<div class="t " style="left:357px;top:103px;font-size:11px;letter-spacing:-0.198px;color:#222">Start Page</div>
<div class="t " style="left:445.5px;top:103px;font-size:11px;letter-spacing:0.390px;font-weight:bold;color:#111">Schematic1.1</div>
<svg class="a" style="left:529.0px;top:104.5px" width="8" height="8" viewBox="0 0 8 8"><path d="M0.7 0.7L7.3 7.3M7.3 0.7L0.7 7.3" stroke="#000" stroke-width="1.6"/></svg>
<div class="t " style="left:576px;top:103px;font-size:11px;letter-spacing:-0.220px;color:#222">Schematic1.2</div>
<svg class="a" style="left:1066.0px;top:104.5px" width="9" height="5" viewBox="0 0 9 5"><path d="M0 0h9L4.5 5z" fill="#000"/></svg>
<div class="hdr" style="left:0px;top:402px;width:1082px;height:17px;"></div>
<div class="t " style="left:1.5px;top:405px;font-size:11px;letter-spacing:-0.275px;color:#222">DxDataBook</div>
<svg class="a" style="left:1034.0px;top:408.5px" width="9" height="5" viewBox="0 0 9 5"><path d="M0 0h9L4.5 5z" fill="#000"/></svg>
<svg class="a" style="left:1051.5px;top:406px" width="8" height="10" viewBox="0 0 8 10"><path d="M2 0.5h4M2.5 0.5v5M5.5 0.5v5M4.8 0.5v5M0.5 5.5h7M4 6v4" stroke="#000" stroke-width="1" fill="none"/></svg>
<svg class="a" style="left:1068.0px;top:407.0px" width="8" height="8" viewBox="0 0 8 8"><path d="M0.7 0.7L7.3 7.3M7.3 0.7L0.7 7.3" stroke="#000" stroke-width="1.7"/></svg>
<div class="a" style="left:0px;top:419px;width:1082px;height:221px;background:#fff;border-right:1px solid #A5A293"></div>
<div class="a" style="left:2px;top:424px;width:1075px;height:212px;background:#ECE9D8;border-top:1px solid #75736A;border-left:1px solid #75736A"></div>
<div class="a" style="left:3px;top:425px;width:1074px;height:1px;background:#B5B2A2"></div>
<div class="a" style="left:6px;top:477px;width:20px;height:1px;background:#ACA899;box-shadow:0 1px 0 #fff"></div>
<div class="a" style="left:6px;top:527px;width:20px;height:1px;background:#ACA899;box-shadow:0 1px 0 #fff"></div>
<svg class="a" style="left:8.5px;top:433px" width="18" height="17" viewBox="0 0 18 17"><path d="M3.500 1h3v3h-3zM9.500 1h3v3h-3zM6.500 5h3v4h-3z" fill="#3A3A3A"/><path d="M0.500 13L3 3.500h3.500l1 9.500zM8.500 13l1-9.500h3.500l2.500 9.500z" fill="#3A3A3A"/><ellipse cx="4" cy="13" rx="3.600" ry="2.800" fill="#3A3A3A"/><ellipse cx="12" cy="13" rx="3.600" ry="2.800" fill="#3A3A3A"/><path d="M3.500 5l-1.500 7M10.500 5l-0.500 7" stroke="#999" stroke-width="0.800"/><path d="M9.500 10.500h2.500v-2.500h3v2.500h2.500v3h-2.500v2.500h-3v-2.500h-2.500z" fill="#38D028" stroke="#0A800A" stroke-width="0.700"/></svg>
<svg class="a" style="left:8px;top:454px" width="18" height="17" viewBox="0 0 18 17"><path d="M1 3l3-2 3 2v11l-3 1-3-1zM7 3l3-2 3 2v11l-3 1-3-1z" fill="#D8D6CC" stroke="#888" stroke-width="1"/><path d="M4 1v14M10 1v14" stroke="#888"/><circle cx="13" cy="10" r="3.500" fill="#E8E6DC" stroke="#777"/><path d="M13 8v4M11 10h4" stroke="#777"/></svg>
<svg class="a" style="left:7px;top:484px" width="19" height="17" viewBox="0 0 19 17"><path d="M1 11l9-4 8 3-9 5z" fill="#A8A698" stroke="#777"/><path d="M5 8l3 3 8-9" stroke="#8A887A" stroke-width="2.500" fill="none"/></svg>
<svg class="a" style="left:7px;top:506px" width="19" height="17" viewBox="0 0 19 17"><rect x="1.500" y="2.500" width="3" height="3" fill="none" stroke="#888"/><rect x="5.500" y="7.500" width="3" height="3" fill="none" stroke="#888"/><path d="M3 6v7h3M10 13h6" stroke="#888" stroke-dasharray="1 1"/><path d="M7 5l3 3 7-7" stroke="#9A988A" stroke-width="2" fill="none"/></svg>
<svg class="a" style="left:8px;top:533px" width="18" height="17" viewBox="0 0 18 17"><path d="M3.500 1h3v3h-3zM9.500 1h3v3h-3zM6.500 5h3v4h-3z" fill="#6E6C60"/><path d="M0.500 13L3 3.500h3.500l1 9.500zM8.500 13l1-9.500h3.500l2.500 9.500z" fill="#6E6C60"/><ellipse cx="4" cy="13" rx="3.600" ry="2.800" fill="#6E6C60"/><ellipse cx="12" cy="13" rx="3.600" ry="2.800" fill="#6E6C60"/><path d="M3.500 5l-1.500 7M10.500 5l-0.500 7" stroke="#999" stroke-width="0.800"/><path d="M10 3l7 7M17 3l-7 7" stroke="#C8C6B8" stroke-width="1.500"/></svg>
<div class="a" style="left:30px;top:446px;width:620px;height:170px;background:#F1EFE4;border:1px solid #919B9C"></div>
<div class="a" style="left:90px;top:429px;width:68px;height:18px;background:linear-gradient(#FDFDFB,#ECEBE0);border:1px solid #919B9C;border-bottom:none;border-radius:3px 3px 0 0"></div>
<div class="a" style="left:159.5px;top:429px;width:71.5px;height:18px;background:linear-gradient(#FDFDFB,#ECEBE0);border:1px solid #919B9C;border-bottom:none;border-radius:3px 3px 0 0"></div>
<div class="a" style="left:29px;top:426px;width:61px;height:21px;background:#FCFCF8;border:1px solid #919B9C;border-bottom:none;border-top:3px solid #F3A22C;border-radius:3px 3px 0 0"></div>
<div class="t " style="left:36px;top:431px;font-size:11px;letter-spacing:-0.153px;color:#222">Part View</div>
<div class="t " style="left:93.5px;top:433px;font-size:11px;letter-spacing:-0.444px;color:#222">Symbol View</div>
<div class="t " style="left:164.5px;top:433px;font-size:11px;letter-spacing:-0.438px;color:#222">Reuse Blocks</div>
<div class="a" style="left:38px;top:459px;width:73px;height:20px;background:#fff;border:1px solid #7F9DB9"></div>
<div class="a" style="left:112px;top:459px;width:122px;height:20px;background:#fff;border:1px solid #7F9DB9"></div>
<div class="a" style="left:235px;top:459px;width:177px;height:20px;background:#fff;border:1px solid #7F9DB9"></div>
<div class="a" style="left:413px;top:459px;width:87px;height:20px;background:#fff;border:1px solid #7F9DB9"></div>
<div class="a" style="left:501px;top:459px;width:36px;height:20px;background:#fff;border:1px solid #7F9DB9"></div>
<div class="t " style="left:240px;top:463px;font-size:11px;letter-spacing:0.374px;color:#222">*ls*</div>
<div class="a" style="left:540px;top:460px;width:82px;height:20px;border:1px solid #003C74;border-radius:3px;background:linear-gradient(#FFFFFF,#EEEDE4 85%,#D8D4C6);box-shadow:inset 0 0 0 2px #A9C0F0"></div>
<div class="t " style="left:545px;top:464px;font-size:12px;color:#000;letter-spacing:-0.1px">清除筛选条件</div>
<div class="a" style="left:543px;top:488px;width:13px;height:13px;background:linear-gradient(135deg,#DCDCD7,#fff);border:1px solid #1C5180"></div>
<div class="t " style="left:558px;top:489px;font-size:12px;color:#000">添加网络</div>
<div class="a" style="left:543px;top:509px;width:13px;height:13px;background:#fff;border:1px solid #CAC8BB"></div>
<div class="t " style="left:558px;top:510px;font-size:12px;color:#ACA899">添加网络名</div>
<div class="a" style="left:38px;top:490px;width:500px;height:117px;background:#fff;border:1px solid #7F9DB9"></div>
<div class="a" style="left:39px;top:491px;width:498px;height:20px;background:#EBEADB;border-bottom:1px solid #CBC7B8;box-shadow:inset 0 -2px 0 #D6D2C2"></div>
<div class="a" style="left:111.5px;top:494px;width:1px;height:14px;background:#C7C5B2;box-shadow:1px 0 0 #fff"></div>
<div class="a" style="left:234.5px;top:494px;width:1px;height:14px;background:#C7C5B2;box-shadow:1px 0 0 #fff"></div>
<div class="a" style="left:412.5px;top:494px;width:1px;height:14px;background:#C7C5B2;box-shadow:1px 0 0 #fff"></div>
<div class="a" style="left:500.5px;top:494px;width:1px;height:14px;background:#C7C5B2;box-shadow:1px 0 0 #fff"></div>
<div class="t " style="left:48.5px;top:497px;font-size:11px;letter-spacing:-0.039px;color:#222">Partition</div>
<div class="t " style="left:121.5px;top:497px;font-size:11px;letter-spacing:0.081px;color:#222">Part</div>
<div class="t " style="left:244.5px;top:497px;font-size:11px;letter-spacing:-0.363px;color:#222">Symbol</div>
<div class="t " style="left:422.5px;top:497px;font-size:11px;letter-spacing:-0.114px;color:#222">Slot</div>
<div class="t" style="left:510px;top:497px;font-size:11px;color:#222;width:26px;overflow:hidden;letter-spacing:0.3px">Part N</div>
<div class="a" style="left:44px;top:525px;width:492px;height:13px;background:#316AC5"></div>
<div class="t " style="left:45.5px;top:513px;font-size:11px;letter-spacing:-0.500px;color:#111">TTL Logic</div>
<div class="t " style="left:129px;top:513px;font-size:11px;letter-spacing:-0.443px;color:#111">74LS32-DIP</div>
<div class="t " style="left:251px;top:513px;font-size:11px;letter-spacing:-0.203px;color:#111">Logic:ls32</div>
<div class="a" style="left:415px;top:514px;width:9px;height:9px;background:#fff;border:1px solid #555;border-radius:1px"></div>
<div class="a" style="left:417px;top:518px;width:5px;height:1px;background:#000"></div>
<div class="a" style="left:419px;top:516px;width:1px;height:5px;background:#000"></div>
<div class="a" style="left:115px;top:514px;width:9px;height:9px;background:#fff;border:1px solid #888;border-radius:1px"></div>
<div class="a" style="left:117px;top:518px;width:5px;height:1px;background:#000"></div>
<div class="t " style="left:430px;top:513px;font-size:11px;letter-spacing:-0.033px;font-style:italic;color:#8C8C8C">unassigned...</div>
<div class="t" style="left:518px;top:513px;font-size:11px;color:#8C8C8C;font-style:italic;width:18px;overflow:hidden;letter-spacing:0px">74L</div>
<div class="t " style="left:129px;top:526px;font-size:11px;letter-spacing:-0.443px;color:#fff">74LS74-DIP</div>
<div class="t " style="left:251px;top:526px;font-size:11px;letter-spacing:-0.203px;color:#fff">Logic:ls74</div>
<div class="a" style="left:415px;top:527px;width:9px;height:9px;background:#fff;border:1px solid #555;border-radius:1px"></div>
<div class="a" style="left:417px;top:531px;width:5px;height:1px;background:#000"></div>
<div class="a" style="left:419px;top:529px;width:1px;height:5px;background:#000"></div>
<div class="t " style="left:430px;top:526px;font-size:11px;letter-spacing:-0.033px;font-style:italic;color:#5E82C8">unassigned...</div>
<div class="t" style="left:518px;top:526px;font-size:11px;color:#5E82C8;font-style:italic;width:18px;overflow:hidden;letter-spacing:0px">74L</div>
<div class="t " style="left:45.5px;top:539px;font-size:11px;letter-spacing:-0.003px;color:#111">motdrv</div>
<div class="t " style="left:129px;top:539px;font-size:11px;letter-spacing:-0.441px;color:#111">AM26LS31DC(16)</div>
<div class="t " style="left:251px;top:539px;font-size:11px;letter-spacing:-0.231px;color:#111">motdrv:AM26LS31DC_16_</div>
<div class="a" style="left:415px;top:540px;width:9px;height:9px;background:#fff;border:1px solid #555;border-radius:1px"></div>
<div class="a" style="left:417px;top:544px;width:5px;height:1px;background:#000"></div>
<div class="a" style="left:419px;top:542px;width:1px;height:5px;background:#000"></div>
<div class="t " style="left:430px;top:539px;font-size:11px;letter-spacing:-0.033px;font-style:italic;color:#8C8C8C">unassigned...</div>
<div class="t" style="left:518px;top:539px;font-size:11px;color:#8C8C8C;font-style:italic;width:18px;overflow:hidden;letter-spacing:0px">AM.</div>
<div class="a" style="left:39px;top:590px;width:498px;height:16px;background:linear-gradient(180deg,#F3F1EC,#FEFEFB)"></div>
<div class="a" style="left:41px;top:591px;width:14px;height:14px;background:linear-gradient(135deg,#CBD9FA,#B4C8F4);border:1px solid #EEF3FE;border-radius:3px;box-shadow:1px 1px 1px #8A9CC8"></div>
<svg class="a" style="left:41.0px;top:591.0px" width="14" height="14" viewBox="-7 -7 14 14"><path d="M2 -4L-2 0L2 4" stroke="#4D6185" stroke-width="2.2" fill="none"/></svg>
<div class="a" style="left:521px;top:591px;width:14px;height:14px;background:linear-gradient(135deg,#CBD9FA,#B4C8F4);border:1px solid #EEF3FE;border-radius:3px;box-shadow:1px 1px 1px #8A9CC8"></div>
<svg class="a" style="left:521.0px;top:591.0px" width="14" height="14" viewBox="-7 -7 14 14"><path d="M-2 -4L2 0L-2 4" stroke="#4D6185" stroke-width="2.2" fill="none"/></svg>
<div class="a" style="left:59px;top:591px;width:361px;height:14px;background:linear-gradient(180deg,#C9D8FC,#BACCF6);border:1px solid #EEF3FE;border-radius:3px;box-shadow:1px 1px 1px #8A9CC8"></div>
<div class="a" style="left:235.5px;top:595.0px;width:1px;height:6px;background:#8CA0CE"></div>
<div class="a" style="left:237.5px;top:595.0px;width:1px;height:6px;background:#8CA0CE"></div>
<div class="a" style="left:239.5px;top:595.0px;width:1px;height:6px;background:#8CA0CE"></div>
<div class="a" style="left:241.5px;top:595.0px;width:1px;height:6px;background:#8CA0CE"></div>
<div class="a" style="left:657px;top:426px;width:1px;height:194px;background:#55534A"></div>
<div class="a" style="left:658px;top:426px;width:1px;height:194px;background:#fff"></div>
<div class="a" style="left:668px;top:427px;width:398px;height:19px;border:1px solid #003C74;border-radius:3px;background:linear-gradient(#FFFFFF,#F3F2EA 80%,#D8D4C6)"></div>
<div class="t " style="left:842px;top:431px;font-size:12px;color:#000;letter-spacing:0px">放置符号</div>
<svg class="a" style="left:667px;top:456px" width="400" height="106" viewBox="667 456 400 106"><rect x="667" y="456" width="400" height="106" fill="#000"/><line x1="747.5" y1="456" x2="747.5" y2="562" stroke="#444"/><line x1="839.5" y1="456" x2="839.5" y2="562" stroke="#444"/><line x1="932.5" y1="456" x2="932.5" y2="562" stroke="#444"/><line x1="1025.5" y1="456" x2="1025.5" y2="562" stroke="#444"/><line x1="667" y1="461.5" x2="1067" y2="461.5" stroke="#444"/><line x1="667" y1="553.5" x2="1067" y2="553.5" stroke="#444"/><path d="M839.5 463.2H894.7V553.6H839.5Z" stroke="#40DCDC" stroke-width="1.1" fill="none"/><text x="839.5" y="461.5" fill="#FFFF40" stroke="#FFFF40" stroke-width="0.22" font-family="Liberation Mono, monospace" font-size="8.5" letter-spacing="3.6">74LS74</text><path d="M820.6 480.5H829.8M820.6 499.4H839.5M820.6 517.7H839.5M820.6 536.2H829.8M839.5 493.5L855 499.4L839.5 505.5M894.7 489.8H913.6M903.7 527.2H913.6" stroke="#40DCDC" stroke-width="1.1" fill="none"/><circle cx="834.4" cy="480.5" r="5" stroke="#40DCDC" stroke-width="1.1" fill="none"/><circle cx="834.4" cy="536.2" r="5" stroke="#40DCDC" stroke-width="1.1" fill="none"/><circle cx="899.1" cy="527.2" r="5" stroke="#40DCDC" stroke-width="1.1" fill="none"/><text x="845.7" y="481.3" fill="#FFFF40" stroke="#FFFF40" stroke-width="0.22" font-family="Liberation Mono, monospace" font-size="8.5" letter-spacing="3.2">S</text><text x="858.5" y="502.3" fill="#FFFF40" stroke="#FFFF40" stroke-width="0.22" font-family="Liberation Mono, monospace" font-size="8.5" letter-spacing="3">C1</text><text x="846.4" y="519.3" fill="#FFFF40" stroke="#FFFF40" stroke-width="0.22" font-family="Liberation Mono, monospace" font-size="8.5" letter-spacing="3">1D</text><text x="845.7" y="537" fill="#FFFF40" stroke="#FFFF40" stroke-width="0.22" font-family="Liberation Mono, monospace" font-size="8.5" letter-spacing="3.2">R</text></svg>
<div class="a" style="left:667px;top:571px;width:400px;height:21px;background:#fff;border:1px solid #7F9DB9"></div>
<div class="t " style="left:671px;top:576px;font-size:11px;letter-spacing:-0.249px;color:#111">Symbol Logic:ls74.1</div>
<div class="a" style="left:1050px;top:573px;width:16px;height:17px;background:linear-gradient(135deg,#D3E0FC,#A9C1F5);border:1px solid #B5C7F0;border-radius:2px"></div>
<svg class="a" style="left:1053px;top:578px" width="10" height="8" viewBox="0 0 10 8"><path d="M1 1.500L5 5.500L9 1.500" stroke="#4D6185" stroke-width="2" fill="none"/></svg>
<div class="a" style="left:667px;top:603px;width:13px;height:13px;background:#fff;border:1px solid #CAC8BB"></div>
<div class="t " style="left:684px;top:604px;font-size:12px;color:#ACA899">固定</div>
<div class="a" style="left:103px;top:619px;width:974px;height:1.5px;background:#000"></div>
<svg class="a" style="left:38px;top:618px" width="70" height="20" viewBox="38 618 70 20"><path d="M40.800 619L46.500 635.500H97.500L103.500 619Z" fill="#F8F7F0"/><path d="M40.800 619L46.500 635.500H97.500L103.500 619" fill="none" stroke="#000" stroke-width="1.200"/></svg>
<div class="t " style="left:49px;top:622px;font-size:12px;font-weight:bold;letter-spacing:-0.2px">CL 视图</div>
<div class="a" style="left:5.5px;top:620.5px;width:15px;height:15px;border:1px solid #F6F5EC;border-radius:2px;background:#EEEBDC"></div>
<svg class="a" style="left:5.5px;top:620.500px" width="15" height="15" viewBox="0 0 15 15"><path d="M9.500 3L4 7.500L9.500 12Z" fill="#A8A698"/></svg>
<div class="a" style="left:23.5px;top:620.5px;width:15px;height:15px;border:1px solid #F6F5EC;border-radius:2px;background:#EEEBDC"></div>
<svg class="a" style="left:23.5px;top:620.500px" width="15" height="15" viewBox="0 0 15 15"><path d="M5.500 3L11 7.500L5.500 12Z" fill="#A8A698"/></svg>
<div class="a" style="left:0px;top:640px;width:1089px;height:20px;background:linear-gradient(90deg,#E2DFD1,#F1EFE7);border-top:1px solid #A9A697"></div>
<div class="a" style="left:0px;top:641px;width:63px;height:19px;background:#F6F5EE;border-right:1px solid #ACA899;border-left:1px solid #ACA899"></div>
<div class="a" style="left:64px;top:640px;width:87px;height:20px;background:#FEFEFC;border-right:1px solid #8C8A7C"></div>
<svg class="a" style="left:5px;top:645px" width="14" height="13" viewBox="0 0 14 13"><rect x="0.500" y="0.500" width="13" height="12" fill="#fff" stroke="#000"/><rect x="1" y="1" width="12" height="2" fill="#333"/><path d="M2.500 5.500h8M2.500 7.500h6M2.500 9.500h8" stroke="#333"/></svg>
<div class="t " style="left:22px;top:646px;font-size:11px;letter-spacing:0.080px;color:#222">Output</div>
<svg class="a" style="left:68px;top:643px" width="15" height="15" viewBox="0 0 15 15"><path d="M1.500 0.500H8L11.500 4V14.500H1.500Z" fill="#fff" stroke="#666"/><path d="M3.500 4h4M3.500 6h3M3.500 11h5" stroke="#999"/><path d="M5 6.500l5 0 0-2 4.500 4-4.500 4 0-2-5 0z" fill="#D83030" stroke="#901010" stroke-width="0.700"/></svg>
<div class="t " style="left:84.5px;top:646px;font-size:11px;letter-spacing:-0.325px;color:#222">DxDataBook</div>
</body></html>
